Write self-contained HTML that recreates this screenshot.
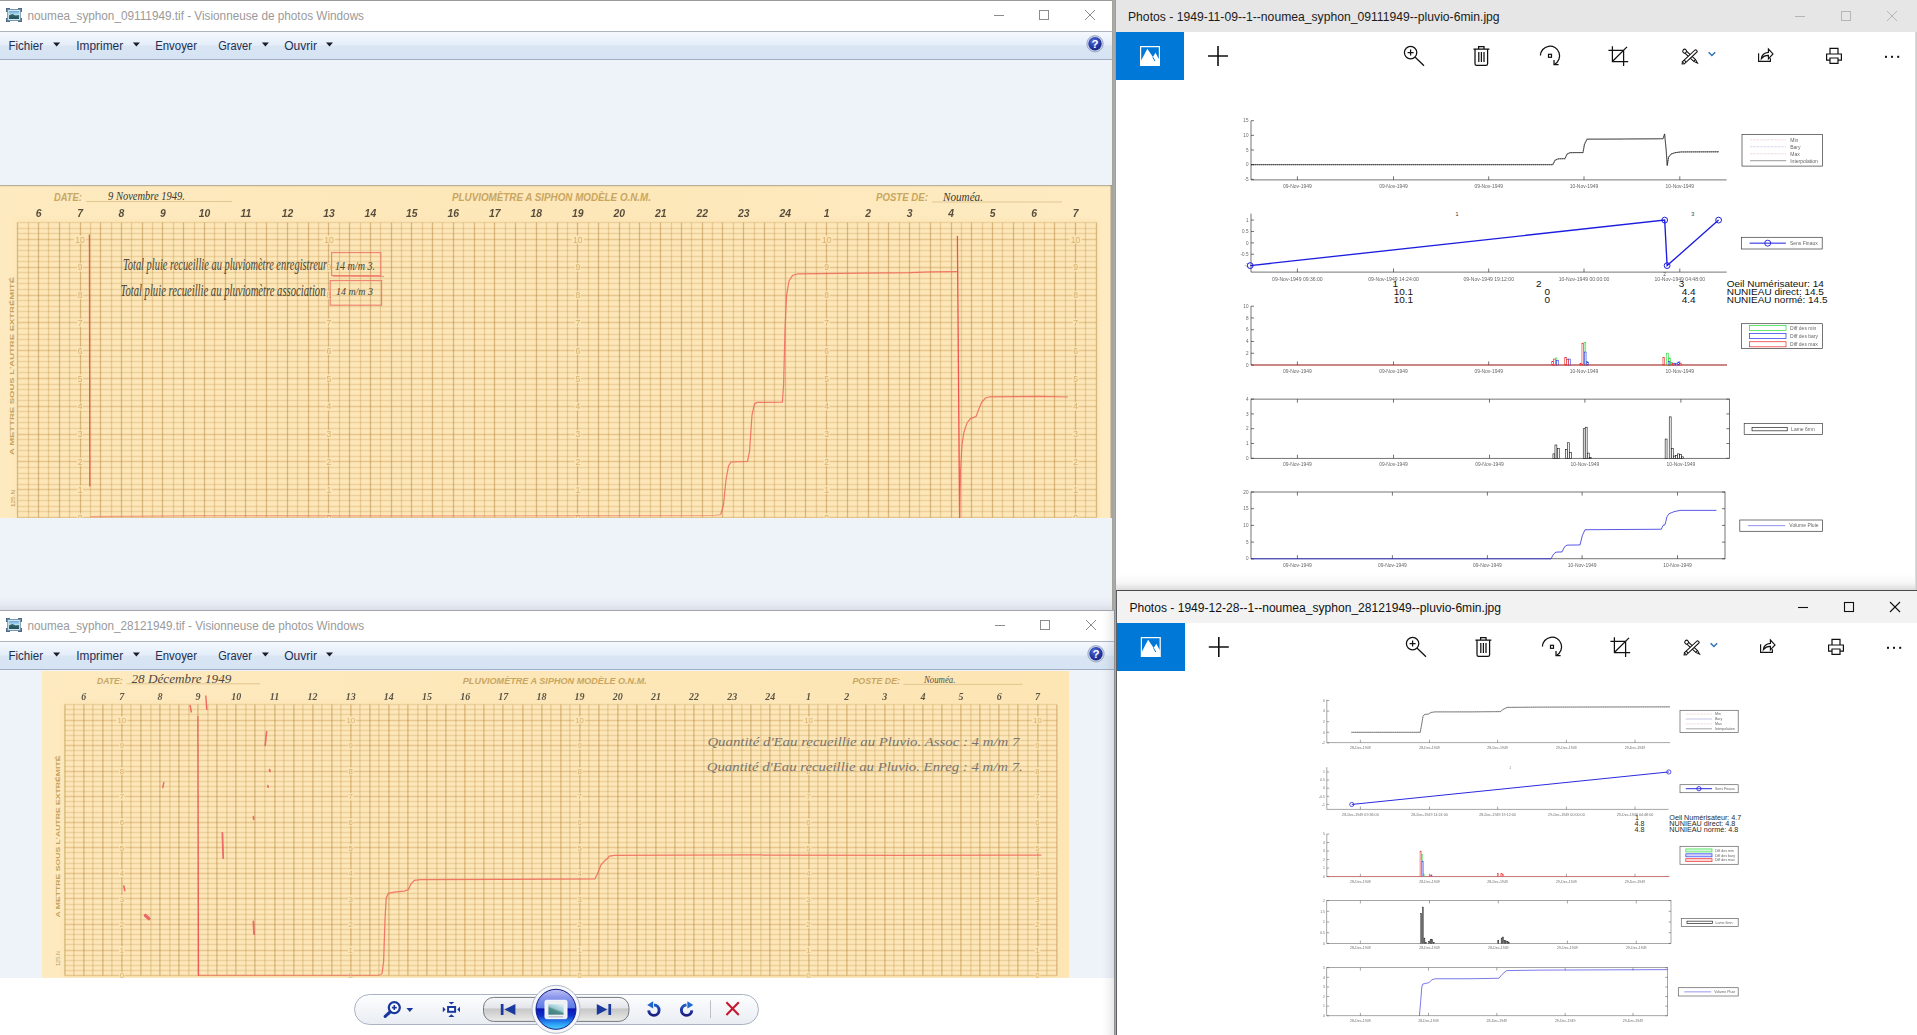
<!DOCTYPE html>
<html lang="fr"><head><meta charset="utf-8"><title>Visionneuse de photos Windows / Photos</title>
<style>
html,body{margin:0;padding:0;}
body{width:1917px;height:1035px;overflow:hidden;position:relative;background:#fff;
 font-family:"Liberation Sans","DejaVu Sans",sans-serif;font-size:12px;}
.win{position:absolute;left:0;top:0;width:0;height:0;}
.win>div,.win>svg{position:absolute;}
svg{display:block;overflow:hidden;}
svg.ov{left:0;top:0;pointer-events:none;}
svg text{font-family:"Liberation Sans","DejaVu Sans",sans-serif;}
svg text.sf{font-family:"Liberation Serif","DejaVu Serif",serif;}
.titlebar{background:#fff;}
.menubar{background:linear-gradient(#f5f8fd 0%,#e4eefa 47%,#d9e5f2 53%,#d5e3f4 100%);
 border-top:1px solid #adb5c1;border-bottom:1px solid #a2aec1;box-sizing:border-box;}
.viewbg{background:#eef3fa;}
.ptitle{background:#e6e6e6;}
.ptitle.act{background:#f2f2f2;}
.pbody{background:#fff;}
.bluebox{background:#0078d7;}
</style></head><body>
<div class="win" id="seam">
<div class="seam" style="left:1112px;top:0px;width:4.2px;height:1035px;background:linear-gradient(90deg,#a3a096 0,#a9a9a4 40%,#a9adb0 72%,#8e9498 100%);"></div>
</div>
<div class="win" id="winA">
<div class="titlebar" style="left:0px;top:0px;width:1112px;height:31px;border-top:1px solid #9b9b9b;box-sizing:border-box;"></div>
<div class="menubar" style="left:0px;top:31px;width:1112px;height:29px;"></div>
<div class="viewbg" style="left:0px;top:60px;width:1112px;height:550px;"></div>
<div class="shadow" style="left:0px;top:597px;width:1112px;height:13px;background:linear-gradient(rgba(100,100,112,0) 0,rgba(100,100,112,.05) 50%,rgba(100,100,112,.14) 100%);"></div>
<svg class="photo" style="left:0px;top:185px" width="1112" height="333.4" viewBox="0 185 1112 333.4">
<defs><filter id="soft" x="-2%" y="-5%" width="104%" height="110%"><feGaussianBlur stdDeviation="2.5"/></filter><linearGradient id="p1g" x1="0" y1="0" x2="1" y2="0"><stop offset="0" stop-color="#feeac0"/><stop offset=".5" stop-color="#fde7b8"/><stop offset="1" stop-color="#feebc2"/></linearGradient></defs>
<rect x="0" y="185" width="1112" height="333.4" fill="url(#p1g)" />
<rect x="0" y="185" width="1112" height="1.2" fill="#9c9684" opacity="0.7" />
<rect x="1110.5" y="185" width="1.5" height="333.4" fill="#8c8878" opacity="0.7" />
<rect x="14.5" y="219.5" width="1085" height="301" fill="#fde6b8" filter="url(#soft)"/>
<path d="M17.5 222.5H1096.5M17.5 228.5H1096.5M17.5 233.5H1096.5M17.5 245.5H1096.5M17.5 250.5H1096.5M17.5 256.5H1096.5M17.5 261.5H1096.5M17.5 272.5H1096.5M17.5 278.5H1096.5M17.5 283.5H1096.5M17.5 289.5H1096.5M17.5 300.5H1096.5M17.5 306.5H1096.5M17.5 311.5H1096.5M17.5 317.5H1096.5M17.5 328.5H1096.5M17.5 334.5H1096.5M17.5 339.5H1096.5M17.5 345.5H1096.5M17.5 356.5H1096.5M17.5 361.5H1096.5M17.5 367.5H1096.5M17.5 372.5H1096.5M17.5 384.5H1096.5M17.5 389.5H1096.5M17.5 395.5H1096.5M17.5 400.5H1096.5M17.5 411.5H1096.5M17.5 417.5H1096.5M17.5 422.5H1096.5M17.5 428.5H1096.5M17.5 439.5H1096.5M17.5 445.5H1096.5M17.5 450.5H1096.5M17.5 456.5H1096.5M17.5 467.5H1096.5M17.5 473.5H1096.5M17.5 478.5H1096.5M17.5 484.5H1096.5M17.5 495.5H1096.5M17.5 500.5H1096.5M17.5 506.5H1096.5M17.5 511.5H1096.5" stroke="#b07e2c" stroke-width="1.3" opacity=".20" fill="none"/>
<path d="M17.5 239.5H1096.5M17.5 267.5H1096.5M17.5 295.5H1096.5M17.5 322.5H1096.5M17.5 350.5H1096.5M17.5 378.5H1096.5M17.5 406.5H1096.5M17.5 434.5H1096.5M17.5 461.5H1096.5M17.5 489.5H1096.5M17.5 517.5H1096.5" stroke="#b07e2c" stroke-width="1.3" opacity=".30" fill="none"/>
<path d="M28.5 222.5V517.5M48.5 222.5V517.5M69.5 222.5V517.5M90.5 222.5V517.5M111.5 222.5V517.5M131.5 222.5V517.5M152.5 222.5V517.5M173.5 222.5V517.5M194.5 222.5V517.5M214.5 222.5V517.5M235.5 222.5V517.5M256.5 222.5V517.5M277.5 222.5V517.5M297.5 222.5V517.5M318.5 222.5V517.5M339.5 222.5V517.5M360.5 222.5V517.5M380.5 222.5V517.5M401.5 222.5V517.5M422.5 222.5V517.5M442.5 222.5V517.5M463.5 222.5V517.5M484.5 222.5V517.5M505.5 222.5V517.5M525.5 222.5V517.5M546.5 222.5V517.5M567.5 222.5V517.5M588.5 222.5V517.5M608.5 222.5V517.5M629.5 222.5V517.5M650.5 222.5V517.5M671.5 222.5V517.5M691.5 222.5V517.5M712.5 222.5V517.5M733.5 222.5V517.5M754.5 222.5V517.5M774.5 222.5V517.5M795.5 222.5V517.5M816.5 222.5V517.5M837.5 222.5V517.5M857.5 222.5V517.5M878.5 222.5V517.5M899.5 222.5V517.5M919.5 222.5V517.5M940.5 222.5V517.5M961.5 222.5V517.5M982.5 222.5V517.5M1002.5 222.5V517.5M1023.5 222.5V517.5M1044.5 222.5V517.5M1065.5 222.5V517.5M1085.5 222.5V517.5" stroke="#b08030" stroke-width="1.3" opacity=".27" fill="none"/>
<path d="M17.5 222.5V517.5M38.5 222.5V517.5M59.5 222.5V517.5M80.5 222.5V517.5M100.5 222.5V517.5M121.5 222.5V517.5M142.5 222.5V517.5M162.5 222.5V517.5M183.5 222.5V517.5M204.5 222.5V517.5M225.5 222.5V517.5M245.5 222.5V517.5M266.5 222.5V517.5M287.5 222.5V517.5M308.5 222.5V517.5M328.5 222.5V517.5M349.5 222.5V517.5M370.5 222.5V517.5M391.5 222.5V517.5M411.5 222.5V517.5M432.5 222.5V517.5M453.5 222.5V517.5M474.5 222.5V517.5M494.5 222.5V517.5M515.5 222.5V517.5M536.5 222.5V517.5M557.5 222.5V517.5M577.5 222.5V517.5M598.5 222.5V517.5M619.5 222.5V517.5M639.5 222.5V517.5M660.5 222.5V517.5M681.5 222.5V517.5M702.5 222.5V517.5M722.5 222.5V517.5M743.5 222.5V517.5M764.5 222.5V517.5M785.5 222.5V517.5M805.5 222.5V517.5M826.5 222.5V517.5M847.5 222.5V517.5M868.5 222.5V517.5M888.5 222.5V517.5M909.5 222.5V517.5M930.5 222.5V517.5M951.5 222.5V517.5M971.5 222.5V517.5M992.5 222.5V517.5M1013.5 222.5V517.5M1034.5 222.5V517.5M1054.5 222.5V517.5M1075.5 222.5V517.5M1096.5 222.5V517.5" stroke="#a8782a" stroke-width="1.3" opacity=".42" fill="none"/>
<text x="54" y="200.8" font-size="10.2" fill="#c9a660" textLength="28" lengthAdjust="spacingAndGlyphs" font-weight="bold" font-style="italic">DATE:</text>
<line x1="86" y1="201.5" x2="232" y2="201.5" stroke="#d9bf86" stroke-width="0.8" />
<text x="452" y="200.9" font-size="10.2" fill="#c9a660" textLength="199" lengthAdjust="spacingAndGlyphs" font-weight="bold" font-style="italic">PLUVIOMÈTRE A SIPHON MODÈLE O.N.M.</text>
<text x="876" y="200.9" font-size="10.2" fill="#c9a660" textLength="52" lengthAdjust="spacingAndGlyphs" font-weight="bold" font-style="italic">POSTE DE:</text>
<line x1="932" y1="202" x2="1062" y2="202" stroke="#d9bf86" stroke-width="0.8" />
<text x="108" y="200.5" font-size="11.5" fill="#3c3a30" textLength="77" lengthAdjust="spacingAndGlyphs" font-style="italic" class="sf">9 Novembre 1949.</text>
<text x="943" y="201" font-size="11.5" fill="#3c3a30" textLength="40" lengthAdjust="spacingAndGlyphs" font-style="italic" class="sf">Nouméa.</text>
<text x="38.54" y="216.8" font-size="10.4" fill="#453d2e" text-anchor="middle" font-weight="bold" font-style="italic" opacity="0.9">6</text>
<text x="80.02" y="216.8" font-size="10.4" fill="#453d2e" text-anchor="middle" font-weight="bold" font-style="italic" opacity="0.9">7</text>
<text x="121.5" y="216.8" font-size="10.4" fill="#453d2e" text-anchor="middle" font-weight="bold" font-style="italic" opacity="0.9">8</text>
<text x="162.98" y="216.8" font-size="10.4" fill="#453d2e" text-anchor="middle" font-weight="bold" font-style="italic" opacity="0.9">9</text>
<text x="204.46" y="216.8" font-size="10.4" fill="#453d2e" text-anchor="middle" font-weight="bold" font-style="italic" opacity="0.9">10</text>
<text x="245.94" y="216.8" font-size="10.4" fill="#453d2e" text-anchor="middle" font-weight="bold" font-style="italic" opacity="0.9">11</text>
<text x="287.42" y="216.8" font-size="10.4" fill="#453d2e" text-anchor="middle" font-weight="bold" font-style="italic" opacity="0.9">12</text>
<text x="328.9" y="216.8" font-size="10.4" fill="#453d2e" text-anchor="middle" font-weight="bold" font-style="italic" opacity="0.9">13</text>
<text x="370.38" y="216.8" font-size="10.4" fill="#453d2e" text-anchor="middle" font-weight="bold" font-style="italic" opacity="0.9">14</text>
<text x="411.86" y="216.8" font-size="10.4" fill="#453d2e" text-anchor="middle" font-weight="bold" font-style="italic" opacity="0.9">15</text>
<text x="453.34" y="216.8" font-size="10.4" fill="#453d2e" text-anchor="middle" font-weight="bold" font-style="italic" opacity="0.9">16</text>
<text x="494.82" y="216.8" font-size="10.4" fill="#453d2e" text-anchor="middle" font-weight="bold" font-style="italic" opacity="0.9">17</text>
<text x="536.3" y="216.8" font-size="10.4" fill="#453d2e" text-anchor="middle" font-weight="bold" font-style="italic" opacity="0.9">18</text>
<text x="577.78" y="216.8" font-size="10.4" fill="#453d2e" text-anchor="middle" font-weight="bold" font-style="italic" opacity="0.9">19</text>
<text x="619.26" y="216.8" font-size="10.4" fill="#453d2e" text-anchor="middle" font-weight="bold" font-style="italic" opacity="0.9">20</text>
<text x="660.74" y="216.8" font-size="10.4" fill="#453d2e" text-anchor="middle" font-weight="bold" font-style="italic" opacity="0.9">21</text>
<text x="702.22" y="216.8" font-size="10.4" fill="#453d2e" text-anchor="middle" font-weight="bold" font-style="italic" opacity="0.9">22</text>
<text x="743.7" y="216.8" font-size="10.4" fill="#453d2e" text-anchor="middle" font-weight="bold" font-style="italic" opacity="0.9">23</text>
<text x="785.18" y="216.8" font-size="10.4" fill="#453d2e" text-anchor="middle" font-weight="bold" font-style="italic" opacity="0.9">24</text>
<text x="826.66" y="216.8" font-size="10.4" fill="#453d2e" text-anchor="middle" font-weight="bold" font-style="italic" opacity="0.9">1</text>
<text x="868.14" y="216.8" font-size="10.4" fill="#453d2e" text-anchor="middle" font-weight="bold" font-style="italic" opacity="0.9">2</text>
<text x="909.62" y="216.8" font-size="10.4" fill="#453d2e" text-anchor="middle" font-weight="bold" font-style="italic" opacity="0.9">3</text>
<text x="951.1" y="216.8" font-size="10.4" fill="#453d2e" text-anchor="middle" font-weight="bold" font-style="italic" opacity="0.9">4</text>
<text x="992.58" y="216.8" font-size="10.4" fill="#453d2e" text-anchor="middle" font-weight="bold" font-style="italic" opacity="0.9">5</text>
<text x="1034.06" y="216.8" font-size="10.4" fill="#453d2e" text-anchor="middle" font-weight="bold" font-style="italic" opacity="0.9">6</text>
<text x="1075.54" y="216.8" font-size="10.4" fill="#453d2e" text-anchor="middle" font-weight="bold" font-style="italic" opacity="0.9">7</text>
<rect x="76.92" y="513.2" width="6.19" height="8.6" fill="#fde6b8" opacity="0.8" />
<text x="80.02" y="520.6" font-size="8.6" fill="#cfa55a" text-anchor="middle" opacity="0.8">0</text>
<rect x="76.92" y="485.4" width="6.19" height="8.6" fill="#fde6b8" opacity="0.8" />
<text x="80.02" y="492.8" font-size="8.6" fill="#cfa55a" text-anchor="middle" opacity="0.8">1</text>
<rect x="76.92" y="457.6" width="6.19" height="8.6" fill="#fde6b8" opacity="0.8" />
<text x="80.02" y="465" font-size="8.6" fill="#cfa55a" text-anchor="middle" opacity="0.8">2</text>
<rect x="76.92" y="429.8" width="6.19" height="8.6" fill="#fde6b8" opacity="0.8" />
<text x="80.02" y="437.2" font-size="8.6" fill="#cfa55a" text-anchor="middle" opacity="0.8">3</text>
<rect x="76.92" y="402" width="6.19" height="8.6" fill="#fde6b8" opacity="0.8" />
<text x="80.02" y="409.4" font-size="8.6" fill="#cfa55a" text-anchor="middle" opacity="0.8">4</text>
<rect x="76.92" y="374.2" width="6.19" height="8.6" fill="#fde6b8" opacity="0.8" />
<text x="80.02" y="381.6" font-size="8.6" fill="#cfa55a" text-anchor="middle" opacity="0.8">5</text>
<rect x="76.92" y="346.4" width="6.19" height="8.6" fill="#fde6b8" opacity="0.8" />
<text x="80.02" y="353.8" font-size="8.6" fill="#cfa55a" text-anchor="middle" opacity="0.8">6</text>
<rect x="76.92" y="318.6" width="6.19" height="8.6" fill="#fde6b8" opacity="0.8" />
<text x="80.02" y="326" font-size="8.6" fill="#cfa55a" text-anchor="middle" opacity="0.8">7</text>
<rect x="76.92" y="290.8" width="6.19" height="8.6" fill="#fde6b8" opacity="0.8" />
<text x="80.02" y="298.2" font-size="8.6" fill="#cfa55a" text-anchor="middle" opacity="0.8">8</text>
<rect x="76.92" y="263" width="6.19" height="8.6" fill="#fde6b8" opacity="0.8" />
<text x="80.02" y="270.4" font-size="8.6" fill="#cfa55a" text-anchor="middle" opacity="0.8">9</text>
<rect x="73.83" y="235.2" width="12.38" height="8.6" fill="#fde6b8" opacity="0.8" />
<text x="80.02" y="242.6" font-size="8.6" fill="#cfa55a" text-anchor="middle" opacity="0.8">10</text>
<rect x="325.8" y="513.2" width="6.19" height="8.6" fill="#fde6b8" opacity="0.8" />
<text x="328.9" y="520.6" font-size="8.6" fill="#cfa55a" text-anchor="middle" opacity="0.8">0</text>
<rect x="325.8" y="485.4" width="6.19" height="8.6" fill="#fde6b8" opacity="0.8" />
<text x="328.9" y="492.8" font-size="8.6" fill="#cfa55a" text-anchor="middle" opacity="0.8">1</text>
<rect x="325.8" y="457.6" width="6.19" height="8.6" fill="#fde6b8" opacity="0.8" />
<text x="328.9" y="465" font-size="8.6" fill="#cfa55a" text-anchor="middle" opacity="0.8">2</text>
<rect x="325.8" y="429.8" width="6.19" height="8.6" fill="#fde6b8" opacity="0.8" />
<text x="328.9" y="437.2" font-size="8.6" fill="#cfa55a" text-anchor="middle" opacity="0.8">3</text>
<rect x="325.8" y="402" width="6.19" height="8.6" fill="#fde6b8" opacity="0.8" />
<text x="328.9" y="409.4" font-size="8.6" fill="#cfa55a" text-anchor="middle" opacity="0.8">4</text>
<rect x="325.8" y="374.2" width="6.19" height="8.6" fill="#fde6b8" opacity="0.8" />
<text x="328.9" y="381.6" font-size="8.6" fill="#cfa55a" text-anchor="middle" opacity="0.8">5</text>
<rect x="325.8" y="346.4" width="6.19" height="8.6" fill="#fde6b8" opacity="0.8" />
<text x="328.9" y="353.8" font-size="8.6" fill="#cfa55a" text-anchor="middle" opacity="0.8">6</text>
<rect x="325.8" y="318.6" width="6.19" height="8.6" fill="#fde6b8" opacity="0.8" />
<text x="328.9" y="326" font-size="8.6" fill="#cfa55a" text-anchor="middle" opacity="0.8">7</text>
<rect x="325.8" y="290.8" width="6.19" height="8.6" fill="#fde6b8" opacity="0.8" />
<text x="328.9" y="298.2" font-size="8.6" fill="#cfa55a" text-anchor="middle" opacity="0.8">8</text>
<rect x="325.8" y="263" width="6.19" height="8.6" fill="#fde6b8" opacity="0.8" />
<text x="328.9" y="270.4" font-size="8.6" fill="#cfa55a" text-anchor="middle" opacity="0.8">9</text>
<rect x="322.71" y="235.2" width="12.38" height="8.6" fill="#fde6b8" opacity="0.8" />
<text x="328.9" y="242.6" font-size="8.6" fill="#cfa55a" text-anchor="middle" opacity="0.8">10</text>
<rect x="574.68" y="513.2" width="6.19" height="8.6" fill="#fde6b8" opacity="0.8" />
<text x="577.78" y="520.6" font-size="8.6" fill="#cfa55a" text-anchor="middle" opacity="0.8">0</text>
<rect x="574.68" y="485.4" width="6.19" height="8.6" fill="#fde6b8" opacity="0.8" />
<text x="577.78" y="492.8" font-size="8.6" fill="#cfa55a" text-anchor="middle" opacity="0.8">1</text>
<rect x="574.68" y="457.6" width="6.19" height="8.6" fill="#fde6b8" opacity="0.8" />
<text x="577.78" y="465" font-size="8.6" fill="#cfa55a" text-anchor="middle" opacity="0.8">2</text>
<rect x="574.68" y="429.8" width="6.19" height="8.6" fill="#fde6b8" opacity="0.8" />
<text x="577.78" y="437.2" font-size="8.6" fill="#cfa55a" text-anchor="middle" opacity="0.8">3</text>
<rect x="574.68" y="402" width="6.19" height="8.6" fill="#fde6b8" opacity="0.8" />
<text x="577.78" y="409.4" font-size="8.6" fill="#cfa55a" text-anchor="middle" opacity="0.8">4</text>
<rect x="574.68" y="374.2" width="6.19" height="8.6" fill="#fde6b8" opacity="0.8" />
<text x="577.78" y="381.6" font-size="8.6" fill="#cfa55a" text-anchor="middle" opacity="0.8">5</text>
<rect x="574.68" y="346.4" width="6.19" height="8.6" fill="#fde6b8" opacity="0.8" />
<text x="577.78" y="353.8" font-size="8.6" fill="#cfa55a" text-anchor="middle" opacity="0.8">6</text>
<rect x="574.68" y="318.6" width="6.19" height="8.6" fill="#fde6b8" opacity="0.8" />
<text x="577.78" y="326" font-size="8.6" fill="#cfa55a" text-anchor="middle" opacity="0.8">7</text>
<rect x="574.68" y="290.8" width="6.19" height="8.6" fill="#fde6b8" opacity="0.8" />
<text x="577.78" y="298.2" font-size="8.6" fill="#cfa55a" text-anchor="middle" opacity="0.8">8</text>
<rect x="574.68" y="263" width="6.19" height="8.6" fill="#fde6b8" opacity="0.8" />
<text x="577.78" y="270.4" font-size="8.6" fill="#cfa55a" text-anchor="middle" opacity="0.8">9</text>
<rect x="571.59" y="235.2" width="12.38" height="8.6" fill="#fde6b8" opacity="0.8" />
<text x="577.78" y="242.6" font-size="8.6" fill="#cfa55a" text-anchor="middle" opacity="0.8">10</text>
<rect x="823.56" y="513.2" width="6.19" height="8.6" fill="#fde6b8" opacity="0.8" />
<text x="826.66" y="520.6" font-size="8.6" fill="#cfa55a" text-anchor="middle" opacity="0.8">0</text>
<rect x="823.56" y="485.4" width="6.19" height="8.6" fill="#fde6b8" opacity="0.8" />
<text x="826.66" y="492.8" font-size="8.6" fill="#cfa55a" text-anchor="middle" opacity="0.8">1</text>
<rect x="823.56" y="457.6" width="6.19" height="8.6" fill="#fde6b8" opacity="0.8" />
<text x="826.66" y="465" font-size="8.6" fill="#cfa55a" text-anchor="middle" opacity="0.8">2</text>
<rect x="823.56" y="429.8" width="6.19" height="8.6" fill="#fde6b8" opacity="0.8" />
<text x="826.66" y="437.2" font-size="8.6" fill="#cfa55a" text-anchor="middle" opacity="0.8">3</text>
<rect x="823.56" y="402" width="6.19" height="8.6" fill="#fde6b8" opacity="0.8" />
<text x="826.66" y="409.4" font-size="8.6" fill="#cfa55a" text-anchor="middle" opacity="0.8">4</text>
<rect x="823.56" y="374.2" width="6.19" height="8.6" fill="#fde6b8" opacity="0.8" />
<text x="826.66" y="381.6" font-size="8.6" fill="#cfa55a" text-anchor="middle" opacity="0.8">5</text>
<rect x="823.56" y="346.4" width="6.19" height="8.6" fill="#fde6b8" opacity="0.8" />
<text x="826.66" y="353.8" font-size="8.6" fill="#cfa55a" text-anchor="middle" opacity="0.8">6</text>
<rect x="823.56" y="318.6" width="6.19" height="8.6" fill="#fde6b8" opacity="0.8" />
<text x="826.66" y="326" font-size="8.6" fill="#cfa55a" text-anchor="middle" opacity="0.8">7</text>
<rect x="823.56" y="290.8" width="6.19" height="8.6" fill="#fde6b8" opacity="0.8" />
<text x="826.66" y="298.2" font-size="8.6" fill="#cfa55a" text-anchor="middle" opacity="0.8">8</text>
<rect x="823.56" y="263" width="6.19" height="8.6" fill="#fde6b8" opacity="0.8" />
<text x="826.66" y="270.4" font-size="8.6" fill="#cfa55a" text-anchor="middle" opacity="0.8">9</text>
<rect x="820.47" y="235.2" width="12.38" height="8.6" fill="#fde6b8" opacity="0.8" />
<text x="826.66" y="242.6" font-size="8.6" fill="#cfa55a" text-anchor="middle" opacity="0.8">10</text>
<rect x="1072.44" y="513.2" width="6.19" height="8.6" fill="#fde6b8" opacity="0.8" />
<text x="1075.54" y="520.6" font-size="8.6" fill="#cfa55a" text-anchor="middle" opacity="0.8">0</text>
<rect x="1072.44" y="485.4" width="6.19" height="8.6" fill="#fde6b8" opacity="0.8" />
<text x="1075.54" y="492.8" font-size="8.6" fill="#cfa55a" text-anchor="middle" opacity="0.8">1</text>
<rect x="1072.44" y="457.6" width="6.19" height="8.6" fill="#fde6b8" opacity="0.8" />
<text x="1075.54" y="465" font-size="8.6" fill="#cfa55a" text-anchor="middle" opacity="0.8">2</text>
<rect x="1072.44" y="429.8" width="6.19" height="8.6" fill="#fde6b8" opacity="0.8" />
<text x="1075.54" y="437.2" font-size="8.6" fill="#cfa55a" text-anchor="middle" opacity="0.8">3</text>
<rect x="1072.44" y="402" width="6.19" height="8.6" fill="#fde6b8" opacity="0.8" />
<text x="1075.54" y="409.4" font-size="8.6" fill="#cfa55a" text-anchor="middle" opacity="0.8">4</text>
<rect x="1072.44" y="374.2" width="6.19" height="8.6" fill="#fde6b8" opacity="0.8" />
<text x="1075.54" y="381.6" font-size="8.6" fill="#cfa55a" text-anchor="middle" opacity="0.8">5</text>
<rect x="1072.44" y="346.4" width="6.19" height="8.6" fill="#fde6b8" opacity="0.8" />
<text x="1075.54" y="353.8" font-size="8.6" fill="#cfa55a" text-anchor="middle" opacity="0.8">6</text>
<rect x="1072.44" y="318.6" width="6.19" height="8.6" fill="#fde6b8" opacity="0.8" />
<text x="1075.54" y="326" font-size="8.6" fill="#cfa55a" text-anchor="middle" opacity="0.8">7</text>
<rect x="1072.44" y="290.8" width="6.19" height="8.6" fill="#fde6b8" opacity="0.8" />
<text x="1075.54" y="298.2" font-size="8.6" fill="#cfa55a" text-anchor="middle" opacity="0.8">8</text>
<rect x="1072.44" y="263" width="6.19" height="8.6" fill="#fde6b8" opacity="0.8" />
<text x="1075.54" y="270.4" font-size="8.6" fill="#cfa55a" text-anchor="middle" opacity="0.8">9</text>
<rect x="1069.35" y="235.2" width="12.38" height="8.6" fill="#fde6b8" opacity="0.8" />
<text x="1075.54" y="242.6" font-size="8.6" fill="#cfa55a" text-anchor="middle" opacity="0.8">10</text>
<text x="14.4" y="455" font-size="5.6" fill="#c4a058" textLength="178" lengthAdjust="spacingAndGlyphs" font-weight="bold" transform="rotate(-90 14.4 455)">A METTRE SOUS L'AUTRE EXTRÉMITÉ</text>
<text x="14.6" y="507" font-size="5" fill="#b8985a" textLength="17" lengthAdjust="spacingAndGlyphs" transform="rotate(-90 14.6 507)">125.N</text>
<text x="123" y="270" font-size="17.5" fill="#4b4636" textLength="204" lengthAdjust="spacingAndGlyphs" font-style="italic" class="sf">Total pluie recueillie au pluviomètre enregistreur</text>
<text x="120.5" y="296" font-size="17.5" fill="#4b4636" textLength="205" lengthAdjust="spacingAndGlyphs" font-style="italic" class="sf">Total pluie recueillie au pluviomètre association</text>
<text x="335" y="270" font-size="11.5" fill="#4b4636" textLength="40" lengthAdjust="spacingAndGlyphs" font-style="italic" class="sf">14 m/m 3.</text>
<text x="336" y="295" font-size="10" fill="#4b4636" textLength="37" lengthAdjust="spacingAndGlyphs" font-style="italic" class="sf">14 m/m 3</text>
<rect x="331.6" y="252.6" width="49.2" height="23" fill="none" stroke="#ec6f62" stroke-width="1.1" opacity="0.85" />
<line x1="333" y1="276.2" x2="384" y2="276.6" stroke="#ec6f62" stroke-width="1" opacity="0.7" />
<rect x="330.2" y="280.6" width="51.4" height="24.6" fill="none" stroke="#ec6f62" stroke-width="1.1" opacity="0.85" />
<line x1="89.4" y1="234.5" x2="89.8" y2="486.5" stroke="#ee4a4a" stroke-width="1.3" opacity="0.9" />
<polyline points="90.5,516.6 200,515.6 400,515.9 600,515.6 715,515.4 720.7,514.5" fill="none" stroke="#ef6558" stroke-width="1.2" opacity="0.5" />
<polyline points="720.7,514.5 723.5,505 726,480 728.5,466 731,462 747.5,461.5 749.5,452 752,415 754.5,404 757,402.4 782.4,402.2 783.6,385 785,330 786.6,295 789,281 792.5,275.4 798,273.8 860,273.2 910,272.6 930,271.8 957,271.6" fill="none" stroke="#ef6558" stroke-width="1.2" opacity="0.85" />
<line x1="957.4" y1="236" x2="959.6" y2="518" stroke="#ee4444" stroke-width="1.3" opacity="0.9" />
<polyline points="959.6,517 960.6,470 962,445 964,432 967,423 970.5,418.6 976,416.6 978.5,410 981.5,402.5 985.5,398 990,396.8 1040,396.4 1068,397" fill="none" stroke="#ef6558" stroke-width="1.2" opacity="0.85" />
</svg>
<svg class="ov" width="1917" height="1035" viewBox="0 0 1917 1035" ><defs>
<linearGradient id="icoPic" x1="0" y1="0" x2="0" y2="1"><stop offset="0" stop-color="#6aa6d8"/><stop offset=".5" stop-color="#bfe6f2"/><stop offset="1" stop-color="#2c5f66"/></linearGradient>
<radialGradient id="helpG" cx=".4" cy=".3" r=".8"><stop offset="0" stop-color="#5470d8"/><stop offset=".6" stop-color="#2337a6"/><stop offset="1" stop-color="#15216e"/></radialGradient>
<linearGradient id="pillG" x1="0" y1="0" x2="0" y2="1"><stop offset="0" stop-color="#fdfeff"/><stop offset=".5" stop-color="#f3f5f9"/><stop offset="1" stop-color="#e9edf3"/></linearGradient>
<linearGradient id="navG" x1="0" y1="0" x2="0" y2="1"><stop offset="0" stop-color="#f7f8fa"/><stop offset=".44" stop-color="#e3e5ea"/><stop offset=".48" stop-color="#c6c7c6"/><stop offset="1" stop-color="#ececea"/></linearGradient>
<linearGradient id="ballG" x1="0" y1="0" x2="0" y2="1"><stop offset="0" stop-color="#c2c4f4"/><stop offset=".18" stop-color="#8f9aec"/><stop offset=".46" stop-color="#5c7ce6"/><stop offset=".49" stop-color="#0a15b2"/><stop offset=".66" stop-color="#102fca"/><stop offset=".86" stop-color="#2a9cf5"/><stop offset="1" stop-color="#52d4ff"/></linearGradient>
<linearGradient id="picG" x1=".8" y1="0" x2=".2" y2="1"><stop offset="0" stop-color="#d4ecf4"/><stop offset=".45" stop-color="#9cc9d2"/><stop offset=".6" stop-color="#4f8f8a"/><stop offset="1" stop-color="#3f7f86"/></linearGradient>
<linearGradient id="rotG" gradientUnits="userSpaceOnUse" x1="0" y1="1003" x2="0" y2="1016"><stop offset="0" stop-color="#1f6ad2"/><stop offset=".5" stop-color="#1a3aa8"/><stop offset="1" stop-color="#1b1d7e"/></linearGradient>
</defs>
<g transform="translate(6 8)">
<path d="M0 0h4v1.6h-2.4v2.4h-1.6zM16 0h-4v1.6h2.4v2.4h1.6zM0 14h4v-1.6h-2.4v-2.4h-1.6zM16 14h-4v-1.6h2.4v-2.4h1.6z" fill="#4d6b86"/>
<rect x="1.7" y="1.4" width="12.6" height="11" fill="#cdeaf6" stroke="#5f7f9a" stroke-width="0.8" />
<rect x="3.1" y="3" width="9.8" height="7.9" fill="url(#icoPic)" />
<path d="M3.1 7.2 L6.5 6 L9.5 7.4 L12.9 7 V10.9 H3.1z" fill="#1f4d55" opacity=".85"/>
</g>
<text x="27.5" y="20" font-size="12" fill="#9a9a9a" textLength="336.5" lengthAdjust="spacingAndGlyphs">noumea_syphon_09111949.tif - Visionneuse de photos Windows</text>
<line x1="994" y1="15.5" x2="1004" y2="15.5" stroke="#8c8c8c" stroke-width="1" />
<rect x="1039.5" y="10.5" width="9" height="9" fill="none" stroke="#8c8c8c" stroke-width="1" />
<line x1="1085" y1="10" x2="1095" y2="20" stroke="#8c8c8c" stroke-width="1" />
<line x1="1095" y1="10" x2="1085" y2="20" stroke="#8c8c8c" stroke-width="1" />
<text x="8.4" y="49.5" font-size="12" fill="#1e2f52" textLength="34.6" lengthAdjust="spacingAndGlyphs">Fichier</text>
<path d="M53.1 42.5 h7 l-3.5 4z" fill="#1b1b2b"/>
<text x="76.3" y="49.5" font-size="12" fill="#1e2f52" textLength="46.8" lengthAdjust="spacingAndGlyphs">Imprimer</text>
<path d="M132.9 42.5 h7 l-3.5 4z" fill="#1b1b2b"/>
<text x="155.2" y="49.5" font-size="12" fill="#1e2f52" textLength="41.8" lengthAdjust="spacingAndGlyphs">Envoyer</text>
<text x="218.2" y="49.5" font-size="12" fill="#1e2f52" textLength="33.7" lengthAdjust="spacingAndGlyphs">Graver</text>
<path d="M261.9 42.5 h7 l-3.5 4z" fill="#1b1b2b"/>
<text x="284.2" y="49.5" font-size="12" fill="#1e2f52" textLength="32.8" lengthAdjust="spacingAndGlyphs">Ouvrir</text>
<path d="M326 42.5 h7 l-3.5 4z" fill="#1b1b2b"/>
<circle cx="1095" cy="43.8" r="8.2" fill="#c9d3e6" stroke="#8f9dbd" stroke-width=".8"/>
<circle cx="1095" cy="43.8" r="6.7" fill="url(#helpG)"/>
<text x="1095" y="48" font-size="11.5" fill="#fff" text-anchor="middle" font-weight="bold">?</text>
</svg>
</div>
<div class="win" id="winB">
<div class="titlebar" style="left:0px;top:610px;width:1114px;height:31px;border-top:1px solid #a4a4ac;box-sizing:border-box;"></div>
<div class="menubar" style="left:0px;top:641px;width:1114px;height:29px;"></div>
<div class="viewbg" style="left:0px;top:670px;width:1114px;height:308px;"></div>
<div class="bottombar" style="left:0px;top:977.8px;width:1114px;height:57.2px;background:#fff;"></div>
<div class="shadow" style="left:1102px;top:611px;width:11.8px;height:424px;background:linear-gradient(90deg,rgba(100,100,112,0) 0,rgba(100,100,112,.05) 50%,rgba(100,100,112,.15) 100%);"></div>
<div class="edge" style="left:1113.8px;top:610px;width:2.6px;height:425px;background:linear-gradient(90deg,#8f9094 0,#8f9094 38%,#a8a8ac 62%,#a8a8ac 100%);"></div>
<svg class="photo" style="left:41.6px;top:671px" width="1027.6" height="306.8" viewBox="41.6 671 1027.6 306.8">
<defs><linearGradient id="p2g" x1="0" y1="0" x2="1" y2="0"><stop offset="0" stop-color="#feeac0"/><stop offset=".5" stop-color="#fde7b8"/><stop offset="1" stop-color="#fde5b4"/></linearGradient></defs>
<rect x="41.6" y="671" width="1027.6" height="306.8" fill="url(#p2g)" />
<rect x="61.5" y="701.5" width="998" height="277" fill="#fde6b8" filter="url(#soft)"/>
<path d="M64.5 704.5H1056.5M64.5 709.5H1056.5M64.5 714.5H1056.5M64.5 725.5H1056.5M64.5 730.5H1056.5M64.5 735.5H1056.5M64.5 740.5H1056.5M64.5 750.5H1056.5M64.5 755.5H1056.5M64.5 760.5H1056.5M64.5 766.5H1056.5M64.5 776.5H1056.5M64.5 781.5H1056.5M64.5 786.5H1056.5M64.5 791.5H1056.5M64.5 801.5H1056.5M64.5 806.5H1056.5M64.5 812.5H1056.5M64.5 817.5H1056.5M64.5 827.5H1056.5M64.5 832.5H1056.5M64.5 837.5H1056.5M64.5 842.5H1056.5M64.5 852.5H1056.5M64.5 858.5H1056.5M64.5 863.5H1056.5M64.5 868.5H1056.5M64.5 878.5H1056.5M64.5 883.5H1056.5M64.5 888.5H1056.5M64.5 893.5H1056.5M64.5 904.5H1056.5M64.5 909.5H1056.5M64.5 914.5H1056.5M64.5 919.5H1056.5M64.5 929.5H1056.5M64.5 934.5H1056.5M64.5 939.5H1056.5M64.5 944.5H1056.5M64.5 955.5H1056.5M64.5 960.5H1056.5M64.5 965.5H1056.5M64.5 970.5H1056.5" stroke="#b07e2c" stroke-width="1.3" opacity=".20" fill="none"/>
<path d="M64.5 720.5H1056.5M64.5 745.5H1056.5M64.5 771.5H1056.5M64.5 796.5H1056.5M64.5 822.5H1056.5M64.5 847.5H1056.5M64.5 873.5H1056.5M64.5 898.5H1056.5M64.5 924.5H1056.5M64.5 950.5H1056.5M64.5 975.5H1056.5" stroke="#b07e2c" stroke-width="1.3" opacity=".30" fill="none"/>
<path d="M73.5 704.5V975.5M92.5 704.5V975.5M111.5 704.5V975.5M130.5 704.5V975.5M150.5 704.5V975.5M169.5 704.5V975.5M188.5 704.5V975.5M207.5 704.5V975.5M226.5 704.5V975.5M245.5 704.5V975.5M264.5 704.5V975.5M283.5 704.5V975.5M302.5 704.5V975.5M321.5 704.5V975.5M340.5 704.5V975.5M359.5 704.5V975.5M378.5 704.5V975.5M398.5 704.5V975.5M417.5 704.5V975.5M436.5 704.5V975.5M455.5 704.5V975.5M474.5 704.5V975.5M493.5 704.5V975.5M512.5 704.5V975.5M531.5 704.5V975.5M550.5 704.5V975.5M569.5 704.5V975.5M588.5 704.5V975.5M607.5 704.5V975.5M626.5 704.5V975.5M645.5 704.5V975.5M665.5 704.5V975.5M684.5 704.5V975.5M703.5 704.5V975.5M722.5 704.5V975.5M741.5 704.5V975.5M760.5 704.5V975.5M779.5 704.5V975.5M798.5 704.5V975.5M817.5 704.5V975.5M836.5 704.5V975.5M855.5 704.5V975.5M874.5 704.5V975.5M893.5 704.5V975.5M913.5 704.5V975.5M932.5 704.5V975.5M951.5 704.5V975.5M970.5 704.5V975.5M989.5 704.5V975.5M1008.5 704.5V975.5M1027.5 704.5V975.5M1046.5 704.5V975.5" stroke="#b08030" stroke-width="1.3" opacity=".27" fill="none"/>
<path d="M64.5 704.5V975.5M83.5 704.5V975.5M102.5 704.5V975.5M121.5 704.5V975.5M140.5 704.5V975.5M159.5 704.5V975.5M178.5 704.5V975.5M197.5 704.5V975.5M216.5 704.5V975.5M235.5 704.5V975.5M254.5 704.5V975.5M274.5 704.5V975.5M293.5 704.5V975.5M312.5 704.5V975.5M331.5 704.5V975.5M350.5 704.5V975.5M369.5 704.5V975.5M388.5 704.5V975.5M407.5 704.5V975.5M426.5 704.5V975.5M445.5 704.5V975.5M464.5 704.5V975.5M483.5 704.5V975.5M502.5 704.5V975.5M522.5 704.5V975.5M541.5 704.5V975.5M560.5 704.5V975.5M579.5 704.5V975.5M598.5 704.5V975.5M617.5 704.5V975.5M636.5 704.5V975.5M655.5 704.5V975.5M674.5 704.5V975.5M693.5 704.5V975.5M712.5 704.5V975.5M731.5 704.5V975.5M750.5 704.5V975.5M769.5 704.5V975.5M789.5 704.5V975.5M808.5 704.5V975.5M827.5 704.5V975.5M846.5 704.5V975.5M865.5 704.5V975.5M884.5 704.5V975.5M903.5 704.5V975.5M922.5 704.5V975.5M941.5 704.5V975.5M960.5 704.5V975.5M979.5 704.5V975.5M998.5 704.5V975.5M1017.5 704.5V975.5M1037.5 704.5V975.5M1056.5 704.5V975.5" stroke="#a8782a" stroke-width="1.3" opacity=".42" fill="none"/>
<text x="96.6" y="683.8" font-size="9.4" fill="#c9a660" textLength="25.6" lengthAdjust="spacingAndGlyphs" font-weight="bold" font-style="italic">DATE:</text>
<line x1="126" y1="683.8" x2="260" y2="683.8" stroke="#d9bf86" stroke-width="0.8" />
<text x="462.4" y="684" font-size="9.4" fill="#c9a660" textLength="184" lengthAdjust="spacingAndGlyphs" font-weight="bold" font-style="italic">PLUVIOMÈTRE A SIPHON MODÈLE O.N.M.</text>
<text x="852" y="684" font-size="9.4" fill="#c9a660" textLength="47.6" lengthAdjust="spacingAndGlyphs" font-weight="bold" font-style="italic">POSTE DE:</text>
<line x1="903" y1="684.4" x2="1022" y2="684.4" stroke="#d9bf86" stroke-width="0.8" />
<text x="131" y="683.4" font-size="12.5" fill="#4d4a42" textLength="100" lengthAdjust="spacingAndGlyphs" font-style="italic" class="sf">28 Décembre 1949</text>
<text x="923.6" y="683.4" font-size="9.5" fill="#55524a" textLength="31.4" lengthAdjust="spacingAndGlyphs" font-style="italic" class="sf">Nouméa.</text>
<text x="83.28" y="699.6" font-size="10" fill="#3e3b32" text-anchor="middle" font-weight="bold" font-style="italic" class="sf" opacity="0.85">6</text>
<text x="121.42" y="699.6" font-size="10" fill="#3e3b32" text-anchor="middle" font-weight="bold" font-style="italic" class="sf" opacity="0.85">7</text>
<text x="159.57" y="699.6" font-size="10" fill="#3e3b32" text-anchor="middle" font-weight="bold" font-style="italic" class="sf" opacity="0.85">8</text>
<text x="197.73" y="699.6" font-size="10" fill="#3e3b32" text-anchor="middle" font-weight="bold" font-style="italic" class="sf" opacity="0.85">9</text>
<text x="235.88" y="699.6" font-size="10" fill="#3e3b32" text-anchor="middle" font-weight="bold" font-style="italic" class="sf" opacity="0.85">10</text>
<text x="274.02" y="699.6" font-size="10" fill="#3e3b32" text-anchor="middle" font-weight="bold" font-style="italic" class="sf" opacity="0.85">11</text>
<text x="312.18" y="699.6" font-size="10" fill="#3e3b32" text-anchor="middle" font-weight="bold" font-style="italic" class="sf" opacity="0.85">12</text>
<text x="350.32" y="699.6" font-size="10" fill="#3e3b32" text-anchor="middle" font-weight="bold" font-style="italic" class="sf" opacity="0.85">13</text>
<text x="388.47" y="699.6" font-size="10" fill="#3e3b32" text-anchor="middle" font-weight="bold" font-style="italic" class="sf" opacity="0.85">14</text>
<text x="426.62" y="699.6" font-size="10" fill="#3e3b32" text-anchor="middle" font-weight="bold" font-style="italic" class="sf" opacity="0.85">15</text>
<text x="464.77" y="699.6" font-size="10" fill="#3e3b32" text-anchor="middle" font-weight="bold" font-style="italic" class="sf" opacity="0.85">16</text>
<text x="502.92" y="699.6" font-size="10" fill="#3e3b32" text-anchor="middle" font-weight="bold" font-style="italic" class="sf" opacity="0.85">17</text>
<text x="541.08" y="699.6" font-size="10" fill="#3e3b32" text-anchor="middle" font-weight="bold" font-style="italic" class="sf" opacity="0.85">18</text>
<text x="579.23" y="699.6" font-size="10" fill="#3e3b32" text-anchor="middle" font-weight="bold" font-style="italic" class="sf" opacity="0.85">19</text>
<text x="617.38" y="699.6" font-size="10" fill="#3e3b32" text-anchor="middle" font-weight="bold" font-style="italic" class="sf" opacity="0.85">20</text>
<text x="655.52" y="699.6" font-size="10" fill="#3e3b32" text-anchor="middle" font-weight="bold" font-style="italic" class="sf" opacity="0.85">21</text>
<text x="693.68" y="699.6" font-size="10" fill="#3e3b32" text-anchor="middle" font-weight="bold" font-style="italic" class="sf" opacity="0.85">22</text>
<text x="731.83" y="699.6" font-size="10" fill="#3e3b32" text-anchor="middle" font-weight="bold" font-style="italic" class="sf" opacity="0.85">23</text>
<text x="769.98" y="699.6" font-size="10" fill="#3e3b32" text-anchor="middle" font-weight="bold" font-style="italic" class="sf" opacity="0.85">24</text>
<text x="808.12" y="699.6" font-size="10" fill="#3e3b32" text-anchor="middle" font-weight="bold" font-style="italic" class="sf" opacity="0.85">1</text>
<text x="846.27" y="699.6" font-size="10" fill="#3e3b32" text-anchor="middle" font-weight="bold" font-style="italic" class="sf" opacity="0.85">2</text>
<text x="884.43" y="699.6" font-size="10" fill="#3e3b32" text-anchor="middle" font-weight="bold" font-style="italic" class="sf" opacity="0.85">3</text>
<text x="922.58" y="699.6" font-size="10" fill="#3e3b32" text-anchor="middle" font-weight="bold" font-style="italic" class="sf" opacity="0.85">4</text>
<text x="960.73" y="699.6" font-size="10" fill="#3e3b32" text-anchor="middle" font-weight="bold" font-style="italic" class="sf" opacity="0.85">5</text>
<text x="998.88" y="699.6" font-size="10" fill="#3e3b32" text-anchor="middle" font-weight="bold" font-style="italic" class="sf" opacity="0.85">6</text>
<text x="1037.02" y="699.6" font-size="10" fill="#3e3b32" text-anchor="middle" font-weight="bold" font-style="italic" class="sf" opacity="0.85">7</text>
<rect x="118.62" y="971.7" width="5.62" height="7.8" fill="#fde6b8" opacity="0.8" />
<text x="121.42" y="978.41" font-size="7.8" fill="#cfa55a" text-anchor="middle" opacity="0.8">0</text>
<rect x="118.62" y="946.14" width="5.62" height="7.8" fill="#fde6b8" opacity="0.8" />
<text x="121.42" y="952.85" font-size="7.8" fill="#cfa55a" text-anchor="middle" opacity="0.8">1</text>
<rect x="118.62" y="920.58" width="5.62" height="7.8" fill="#fde6b8" opacity="0.8" />
<text x="121.42" y="927.29" font-size="7.8" fill="#cfa55a" text-anchor="middle" opacity="0.8">2</text>
<rect x="118.62" y="895.02" width="5.62" height="7.8" fill="#fde6b8" opacity="0.8" />
<text x="121.42" y="901.73" font-size="7.8" fill="#cfa55a" text-anchor="middle" opacity="0.8">3</text>
<rect x="118.62" y="869.46" width="5.62" height="7.8" fill="#fde6b8" opacity="0.8" />
<text x="121.42" y="876.17" font-size="7.8" fill="#cfa55a" text-anchor="middle" opacity="0.8">4</text>
<rect x="118.62" y="843.9" width="5.62" height="7.8" fill="#fde6b8" opacity="0.8" />
<text x="121.42" y="850.61" font-size="7.8" fill="#cfa55a" text-anchor="middle" opacity="0.8">5</text>
<rect x="118.62" y="818.34" width="5.62" height="7.8" fill="#fde6b8" opacity="0.8" />
<text x="121.42" y="825.05" font-size="7.8" fill="#cfa55a" text-anchor="middle" opacity="0.8">6</text>
<rect x="118.62" y="792.78" width="5.62" height="7.8" fill="#fde6b8" opacity="0.8" />
<text x="121.42" y="799.49" font-size="7.8" fill="#cfa55a" text-anchor="middle" opacity="0.8">7</text>
<rect x="118.62" y="767.22" width="5.62" height="7.8" fill="#fde6b8" opacity="0.8" />
<text x="121.42" y="773.93" font-size="7.8" fill="#cfa55a" text-anchor="middle" opacity="0.8">8</text>
<rect x="118.62" y="741.66" width="5.62" height="7.8" fill="#fde6b8" opacity="0.8" />
<text x="121.42" y="748.37" font-size="7.8" fill="#cfa55a" text-anchor="middle" opacity="0.8">9</text>
<rect x="115.81" y="716.1" width="11.23" height="7.8" fill="#fde6b8" opacity="0.8" />
<text x="121.42" y="722.81" font-size="7.8" fill="#cfa55a" text-anchor="middle" opacity="0.8">10</text>
<rect x="347.52" y="971.7" width="5.62" height="7.8" fill="#fde6b8" opacity="0.8" />
<text x="350.32" y="978.41" font-size="7.8" fill="#cfa55a" text-anchor="middle" opacity="0.8">0</text>
<rect x="347.52" y="946.14" width="5.62" height="7.8" fill="#fde6b8" opacity="0.8" />
<text x="350.32" y="952.85" font-size="7.8" fill="#cfa55a" text-anchor="middle" opacity="0.8">1</text>
<rect x="347.52" y="920.58" width="5.62" height="7.8" fill="#fde6b8" opacity="0.8" />
<text x="350.32" y="927.29" font-size="7.8" fill="#cfa55a" text-anchor="middle" opacity="0.8">2</text>
<rect x="347.52" y="895.02" width="5.62" height="7.8" fill="#fde6b8" opacity="0.8" />
<text x="350.32" y="901.73" font-size="7.8" fill="#cfa55a" text-anchor="middle" opacity="0.8">3</text>
<rect x="347.52" y="869.46" width="5.62" height="7.8" fill="#fde6b8" opacity="0.8" />
<text x="350.32" y="876.17" font-size="7.8" fill="#cfa55a" text-anchor="middle" opacity="0.8">4</text>
<rect x="347.52" y="843.9" width="5.62" height="7.8" fill="#fde6b8" opacity="0.8" />
<text x="350.32" y="850.61" font-size="7.8" fill="#cfa55a" text-anchor="middle" opacity="0.8">5</text>
<rect x="347.52" y="818.34" width="5.62" height="7.8" fill="#fde6b8" opacity="0.8" />
<text x="350.32" y="825.05" font-size="7.8" fill="#cfa55a" text-anchor="middle" opacity="0.8">6</text>
<rect x="347.52" y="792.78" width="5.62" height="7.8" fill="#fde6b8" opacity="0.8" />
<text x="350.32" y="799.49" font-size="7.8" fill="#cfa55a" text-anchor="middle" opacity="0.8">7</text>
<rect x="347.52" y="767.22" width="5.62" height="7.8" fill="#fde6b8" opacity="0.8" />
<text x="350.32" y="773.93" font-size="7.8" fill="#cfa55a" text-anchor="middle" opacity="0.8">8</text>
<rect x="347.52" y="741.66" width="5.62" height="7.8" fill="#fde6b8" opacity="0.8" />
<text x="350.32" y="748.37" font-size="7.8" fill="#cfa55a" text-anchor="middle" opacity="0.8">9</text>
<rect x="344.71" y="716.1" width="11.23" height="7.8" fill="#fde6b8" opacity="0.8" />
<text x="350.32" y="722.81" font-size="7.8" fill="#cfa55a" text-anchor="middle" opacity="0.8">10</text>
<rect x="576.42" y="971.7" width="5.62" height="7.8" fill="#fde6b8" opacity="0.8" />
<text x="579.23" y="978.41" font-size="7.8" fill="#cfa55a" text-anchor="middle" opacity="0.8">0</text>
<rect x="576.42" y="946.14" width="5.62" height="7.8" fill="#fde6b8" opacity="0.8" />
<text x="579.23" y="952.85" font-size="7.8" fill="#cfa55a" text-anchor="middle" opacity="0.8">1</text>
<rect x="576.42" y="920.58" width="5.62" height="7.8" fill="#fde6b8" opacity="0.8" />
<text x="579.23" y="927.29" font-size="7.8" fill="#cfa55a" text-anchor="middle" opacity="0.8">2</text>
<rect x="576.42" y="895.02" width="5.62" height="7.8" fill="#fde6b8" opacity="0.8" />
<text x="579.23" y="901.73" font-size="7.8" fill="#cfa55a" text-anchor="middle" opacity="0.8">3</text>
<rect x="576.42" y="869.46" width="5.62" height="7.8" fill="#fde6b8" opacity="0.8" />
<text x="579.23" y="876.17" font-size="7.8" fill="#cfa55a" text-anchor="middle" opacity="0.8">4</text>
<rect x="576.42" y="843.9" width="5.62" height="7.8" fill="#fde6b8" opacity="0.8" />
<text x="579.23" y="850.61" font-size="7.8" fill="#cfa55a" text-anchor="middle" opacity="0.8">5</text>
<rect x="576.42" y="818.34" width="5.62" height="7.8" fill="#fde6b8" opacity="0.8" />
<text x="579.23" y="825.05" font-size="7.8" fill="#cfa55a" text-anchor="middle" opacity="0.8">6</text>
<rect x="576.42" y="792.78" width="5.62" height="7.8" fill="#fde6b8" opacity="0.8" />
<text x="579.23" y="799.49" font-size="7.8" fill="#cfa55a" text-anchor="middle" opacity="0.8">7</text>
<rect x="576.42" y="767.22" width="5.62" height="7.8" fill="#fde6b8" opacity="0.8" />
<text x="579.23" y="773.93" font-size="7.8" fill="#cfa55a" text-anchor="middle" opacity="0.8">8</text>
<rect x="576.42" y="741.66" width="5.62" height="7.8" fill="#fde6b8" opacity="0.8" />
<text x="579.23" y="748.37" font-size="7.8" fill="#cfa55a" text-anchor="middle" opacity="0.8">9</text>
<rect x="573.61" y="716.1" width="11.23" height="7.8" fill="#fde6b8" opacity="0.8" />
<text x="579.23" y="722.81" font-size="7.8" fill="#cfa55a" text-anchor="middle" opacity="0.8">10</text>
<rect x="805.32" y="971.7" width="5.62" height="7.8" fill="#fde6b8" opacity="0.8" />
<text x="808.12" y="978.41" font-size="7.8" fill="#cfa55a" text-anchor="middle" opacity="0.8">0</text>
<rect x="805.32" y="946.14" width="5.62" height="7.8" fill="#fde6b8" opacity="0.8" />
<text x="808.12" y="952.85" font-size="7.8" fill="#cfa55a" text-anchor="middle" opacity="0.8">1</text>
<rect x="805.32" y="920.58" width="5.62" height="7.8" fill="#fde6b8" opacity="0.8" />
<text x="808.12" y="927.29" font-size="7.8" fill="#cfa55a" text-anchor="middle" opacity="0.8">2</text>
<rect x="805.32" y="895.02" width="5.62" height="7.8" fill="#fde6b8" opacity="0.8" />
<text x="808.12" y="901.73" font-size="7.8" fill="#cfa55a" text-anchor="middle" opacity="0.8">3</text>
<rect x="805.32" y="869.46" width="5.62" height="7.8" fill="#fde6b8" opacity="0.8" />
<text x="808.12" y="876.17" font-size="7.8" fill="#cfa55a" text-anchor="middle" opacity="0.8">4</text>
<rect x="805.32" y="843.9" width="5.62" height="7.8" fill="#fde6b8" opacity="0.8" />
<text x="808.12" y="850.61" font-size="7.8" fill="#cfa55a" text-anchor="middle" opacity="0.8">5</text>
<rect x="805.32" y="818.34" width="5.62" height="7.8" fill="#fde6b8" opacity="0.8" />
<text x="808.12" y="825.05" font-size="7.8" fill="#cfa55a" text-anchor="middle" opacity="0.8">6</text>
<rect x="805.32" y="792.78" width="5.62" height="7.8" fill="#fde6b8" opacity="0.8" />
<text x="808.12" y="799.49" font-size="7.8" fill="#cfa55a" text-anchor="middle" opacity="0.8">7</text>
<rect x="805.32" y="767.22" width="5.62" height="7.8" fill="#fde6b8" opacity="0.8" />
<text x="808.12" y="773.93" font-size="7.8" fill="#cfa55a" text-anchor="middle" opacity="0.8">8</text>
<rect x="805.32" y="741.66" width="5.62" height="7.8" fill="#fde6b8" opacity="0.8" />
<text x="808.12" y="748.37" font-size="7.8" fill="#cfa55a" text-anchor="middle" opacity="0.8">9</text>
<rect x="802.51" y="716.1" width="11.23" height="7.8" fill="#fde6b8" opacity="0.8" />
<text x="808.12" y="722.81" font-size="7.8" fill="#cfa55a" text-anchor="middle" opacity="0.8">10</text>
<rect x="1034.22" y="971.7" width="5.62" height="7.8" fill="#fde6b8" opacity="0.8" />
<text x="1037.02" y="978.41" font-size="7.8" fill="#cfa55a" text-anchor="middle" opacity="0.8">0</text>
<rect x="1034.22" y="946.14" width="5.62" height="7.8" fill="#fde6b8" opacity="0.8" />
<text x="1037.02" y="952.85" font-size="7.8" fill="#cfa55a" text-anchor="middle" opacity="0.8">1</text>
<rect x="1034.22" y="920.58" width="5.62" height="7.8" fill="#fde6b8" opacity="0.8" />
<text x="1037.02" y="927.29" font-size="7.8" fill="#cfa55a" text-anchor="middle" opacity="0.8">2</text>
<rect x="1034.22" y="895.02" width="5.62" height="7.8" fill="#fde6b8" opacity="0.8" />
<text x="1037.02" y="901.73" font-size="7.8" fill="#cfa55a" text-anchor="middle" opacity="0.8">3</text>
<rect x="1034.22" y="869.46" width="5.62" height="7.8" fill="#fde6b8" opacity="0.8" />
<text x="1037.02" y="876.17" font-size="7.8" fill="#cfa55a" text-anchor="middle" opacity="0.8">4</text>
<rect x="1034.22" y="843.9" width="5.62" height="7.8" fill="#fde6b8" opacity="0.8" />
<text x="1037.02" y="850.61" font-size="7.8" fill="#cfa55a" text-anchor="middle" opacity="0.8">5</text>
<rect x="1034.22" y="818.34" width="5.62" height="7.8" fill="#fde6b8" opacity="0.8" />
<text x="1037.02" y="825.05" font-size="7.8" fill="#cfa55a" text-anchor="middle" opacity="0.8">6</text>
<rect x="1034.22" y="792.78" width="5.62" height="7.8" fill="#fde6b8" opacity="0.8" />
<text x="1037.02" y="799.49" font-size="7.8" fill="#cfa55a" text-anchor="middle" opacity="0.8">7</text>
<rect x="1034.22" y="767.22" width="5.62" height="7.8" fill="#fde6b8" opacity="0.8" />
<text x="1037.02" y="773.93" font-size="7.8" fill="#cfa55a" text-anchor="middle" opacity="0.8">8</text>
<rect x="1034.22" y="741.66" width="5.62" height="7.8" fill="#fde6b8" opacity="0.8" />
<text x="1037.02" y="748.37" font-size="7.8" fill="#cfa55a" text-anchor="middle" opacity="0.8">9</text>
<rect x="1031.41" y="716.1" width="11.23" height="7.8" fill="#fde6b8" opacity="0.8" />
<text x="1037.02" y="722.81" font-size="7.8" fill="#cfa55a" text-anchor="middle" opacity="0.8">10</text>
<text x="60" y="917.5" font-size="5.2" fill="#c4a058" textLength="162" lengthAdjust="spacingAndGlyphs" font-weight="bold" transform="rotate(-90 60 917.5)">A METTRE SOUS L'AUTRE EXTRÉMITÉ</text>
<text x="60" y="966" font-size="4.6" fill="#b8985a" textLength="15" lengthAdjust="spacingAndGlyphs" transform="rotate(-90 60 966)">125.N</text>
<text x="707" y="745.6" font-size="13.5" fill="#77756f" textLength="312" lengthAdjust="spacingAndGlyphs" font-style="italic" class="sf">Quantité d'Eau recueillie au Pluvio. Assoc : 4 m/m 7</text>
<text x="706.4" y="770.8" font-size="13.5" fill="#77756f" textLength="316" lengthAdjust="spacingAndGlyphs" font-style="italic" class="sf">Quantité d'Eau recueillie au Pluvio. Enreg : 4 m/m 7.</text>
<line x1="197.5" y1="716" x2="198.2" y2="976" stroke="#ee4a4a" stroke-width="1.1" opacity="0.85" />
<line x1="189.6" y1="705" x2="191" y2="712.5" stroke="#ee4a4a" stroke-width="1.4" opacity="0.8" />
<line x1="205.4" y1="695.5" x2="206.4" y2="710" stroke="#ee4a4a" stroke-width="1.4" opacity="0.8" />
<line x1="266.2" y1="731.5" x2="264.8" y2="745.5" stroke="#ec4c58" stroke-width="1.6" opacity="0.8" stroke-linecap="round"/>
<line x1="163.4" y1="782.5" x2="162.4" y2="787.5" stroke="#ec4c58" stroke-width="1.4" opacity="0.8" stroke-linecap="round"/>
<line x1="222" y1="833" x2="222.8" y2="858" stroke="#ec4c58" stroke-width="1.8" opacity="0.8" stroke-linecap="round"/>
<line x1="145" y1="915.6" x2="148.4" y2="918.6" stroke="#ec4c58" stroke-width="3.4" opacity="0.8" stroke-linecap="round"/>
<line x1="253" y1="921.5" x2="253.6" y2="934" stroke="#ec4c58" stroke-width="1.8" opacity="0.8" stroke-linecap="round"/>
<line x1="123.4" y1="886" x2="124.4" y2="890.5" stroke="#ec4c58" stroke-width="1.6" opacity="0.8" stroke-linecap="round"/>
<line x1="269.2" y1="769.6" x2="269.6" y2="771.4" stroke="#ec4c58" stroke-width="1.8" opacity="0.8" stroke-linecap="round"/>
<line x1="267.4" y1="785.6" x2="267.8" y2="787.2" stroke="#ec4c58" stroke-width="1.6" opacity="0.8" stroke-linecap="round"/>
<line x1="253" y1="816.6" x2="253.3" y2="819.4" stroke="#ec4c58" stroke-width="1.6" opacity="0.8" stroke-linecap="round"/>
<polyline points="198.5,975.3 300,975.5 378,975.3 381.5,974" fill="none" stroke="#ef6558" stroke-width="1.25" opacity="0.6" />
<polyline points="381.5,974 383.2,962 384.6,920 385.8,898 388,893.4 394,892.2 404,891.2 408,889.6 410.5,884 414,880.4 420,879.6 500,879.4 594.5,879 597,874 600.5,865 604.5,860.4 607,858.6 609,856.2 614,855.4 760,855 900,855.4 1041,855.2" fill="none" stroke="#ef6558" stroke-width="1.25" opacity="0.85" />
</svg>
<svg class="ov" width="1917" height="1035" viewBox="0 0 1917 1035" >
<g transform="translate(6 618)">
<path d="M0 0h4v1.6h-2.4v2.4h-1.6zM16 0h-4v1.6h2.4v2.4h1.6zM0 14h4v-1.6h-2.4v-2.4h-1.6zM16 14h-4v-1.6h2.4v-2.4h1.6z" fill="#4d6b86"/>
<rect x="1.7" y="1.4" width="12.6" height="11" fill="#cdeaf6" stroke="#5f7f9a" stroke-width="0.8" />
<rect x="3.1" y="3" width="9.8" height="7.9" fill="url(#icoPic)" />
<path d="M3.1 7.2 L6.5 6 L9.5 7.4 L12.9 7 V10.9 H3.1z" fill="#1f4d55" opacity=".85"/>
</g>
<text x="27.5" y="630" font-size="12" fill="#9a9a9a" textLength="336.5" lengthAdjust="spacingAndGlyphs">noumea_syphon_28121949.tif - Visionneuse de photos Windows</text>
<line x1="995" y1="625.5" x2="1005" y2="625.5" stroke="#8c8c8c" stroke-width="1" />
<rect x="1040.5" y="620.5" width="9" height="9" fill="none" stroke="#8c8c8c" stroke-width="1" />
<line x1="1086" y1="620" x2="1096" y2="630" stroke="#8c8c8c" stroke-width="1" />
<line x1="1096" y1="620" x2="1086" y2="630" stroke="#8c8c8c" stroke-width="1" />
<text x="8.4" y="659.5" font-size="12" fill="#1e2f52" textLength="34.6" lengthAdjust="spacingAndGlyphs">Fichier</text>
<path d="M53.1 652.5 h7 l-3.5 4z" fill="#1b1b2b"/>
<text x="76.3" y="659.5" font-size="12" fill="#1e2f52" textLength="46.8" lengthAdjust="spacingAndGlyphs">Imprimer</text>
<path d="M132.9 652.5 h7 l-3.5 4z" fill="#1b1b2b"/>
<text x="155.2" y="659.5" font-size="12" fill="#1e2f52" textLength="41.8" lengthAdjust="spacingAndGlyphs">Envoyer</text>
<text x="218.2" y="659.5" font-size="12" fill="#1e2f52" textLength="33.7" lengthAdjust="spacingAndGlyphs">Graver</text>
<path d="M261.9 652.5 h7 l-3.5 4z" fill="#1b1b2b"/>
<text x="284.2" y="659.5" font-size="12" fill="#1e2f52" textLength="32.8" lengthAdjust="spacingAndGlyphs">Ouvrir</text>
<path d="M326 652.5 h7 l-3.5 4z" fill="#1b1b2b"/>
<circle cx="1096" cy="653.8" r="8.2" fill="#c9d3e6" stroke="#8f9dbd" stroke-width=".8"/>
<circle cx="1096" cy="653.8" r="6.7" fill="url(#helpG)"/>
<text x="1096" y="658" font-size="11.5" fill="#fff" text-anchor="middle" font-weight="bold">?</text>
<rect x="354.5" y="994.5" width="404" height="30" fill="url(#pillG)" stroke="#aab3c2" stroke-width="1" rx="15" />
<rect x="483.5" y="997.4" width="145.4" height="24" fill="url(#navG)" stroke="#74787f" stroke-width="1" rx="10" />
<line x1="556" y1="997.5" x2="556" y2="1021.5" stroke="#8a8f98" stroke-width="1" />
<circle cx="556" cy="1009.3" r="24" fill="#f6f7fb" stroke="#b4bac8" stroke-width="1"/>
<circle cx="556" cy="1009.3" r="20" fill="url(#ballG)" stroke="#0e1a86" stroke-width="1"/>
<rect x="545" y="1000.3" width="22" height="18.4" fill="#eef0f4" stroke="#fbfcfd" stroke-width="1" rx="1.6" />
<rect x="548.4" y="1004.3" width="15.2" height="10.4" fill="url(#picG)" />
<rect x="548.6" y="1016.2" width="14.6" height="1.2" fill="#b9bfc8" />
<circle cx="394.3" cy="1007.6" r="5.5" fill="#fff" stroke="#1a399e" stroke-width="2.3"/>
<path d="M390 1012l-4.8 4.4" stroke="#1a399e" stroke-width="3.1" stroke-linecap="round"/>
<path d="M391.8 1007.6h5M394.3 1005.1v5" stroke="#1a399e" stroke-width="1.6"/>
<path d="M406.4 1008.1h6.8l-3.4 3.8z" fill="#1a399e"/>
<rect x="448.1" y="1007" width="7" height="4.8" fill="#fff" stroke="#1a399e" stroke-width="2" />
<path d="M448.6 1002.1h5.6l-2.8 2.5zM448.4 1017h6l-3-2.8zM442.8 1006.7v5.6l2.8-2.8zM460 1006.7v5.6l-2.8-2.8z" fill="#1a399e"/>
<path d="M500.8 1004h2.7v11h-2.7zM515.4 1004v11l-11-5.5z" fill="#1a399e"/>
<path d="M608.4 1004h2.7v11h-2.7zM596.8 1004v11l10.4-5.5z" fill="#1a399e"/>
<path d="M654 1005A5.2 5.2 0 1 1 648.7 1010.4" fill="none" stroke="url(#rotG)" stroke-width="2.9"/><path d="M647.2 1005l5.9-3.7v7.2z" fill="#1f66cc"/>
<g transform="translate(1340.5 0) scale(-1 1)"><path d="M654 1005A5.2 5.2 0 1 1 648.7 1010.4" fill="none" stroke="url(#rotG)" stroke-width="2.9"/><path d="M647.2 1005l5.9-3.7v7.2z" fill="#1f66cc"/></g>
<line x1="710.5" y1="1000.4" x2="710.5" y2="1018.2" stroke="#bcbfc8" stroke-width="1" />
<path d="M726.4 1002.2l12.4 12.8M738.8 1002.2l-12.4 12.8" stroke="#c41a30" stroke-width="2.1" fill="none"/>
</svg>
</div>
<div class="win" id="winC">
<div class="pbody" style="left:1116px;top:32px;width:801px;height:558px;"></div>
<div class="ptitle" style="left:1116px;top:0px;width:801px;height:32px;"></div>
<div class="bluebox" style="left:1116px;top:32px;width:68px;height:48px;"></div>
<div class="shadow" style="left:1116px;top:574px;width:801px;height:16px;background:linear-gradient(rgba(90,90,90,0) 0,rgba(90,90,90,.05) 55%,rgba(90,90,90,.21) 100%);"></div>
<div class="redge" style="left:1915px;top:32px;width:2px;height:558px;background:linear-gradient(90deg,#e4e4e4,#c4c4c4);"></div>
<svg class="ov" width="1917" height="1035" viewBox="0 0 1917 1035" >
<text x="1128" y="21.4" font-size="12" fill="#1a1a1a" textLength="371.6" lengthAdjust="spacingAndGlyphs">Photos - 1949-11-09--1--noumea_syphon_09111949--pluvio-6min.jpg</text>
<line x1="1795" y1="16.5" x2="1805" y2="16.5" stroke="#b5b5b5" stroke-width="1" />
<rect x="1841.5" y="11.5" width="9" height="9" fill="none" stroke="#b5b5b5" stroke-width="1" />
<line x1="1887" y1="11" x2="1897" y2="21" stroke="#b5b5b5" stroke-width="1" /><line x1="1897" y1="11" x2="1887" y2="21" stroke="#b5b5b5" stroke-width="1" />
<g transform="translate(0 0)" fill="none" stroke="#111" stroke-width="1.25">
<g stroke="none" transform="translate(0 0)">
<rect x="1140" y="46" width="20" height="20" fill="#fff" />
<path d="M1141.2 47.2h17.6v11.8l-3.3-6.2-2.6 4.2-5.6-8.2-6.1 11.6z" fill="#0078d7"/>
<path d="M1152.8 57.2l2.2 3.9" stroke="#0078d7" stroke-width="1" />
</g>
<path d="M1208 56h20M1218 46v20" stroke-width="1.6" transform="translate(0 0)"/>
<circle cx="1410.6" cy="52.6" r="6.2"/>
<path d="M1415.2 57.2l8.8 8.6M1407.6 52.6h6M1410.6 49.6v6"/>
<path d="M1473.4 49.2h16M1478.6 49v-2.4h5.4v2.4M1475 49.2v14.6q0 1.6 1.6 1.6h9.4q1.6 0 1.6-1.6v-14.6M1478.8 52v10M1481.4 52v10M1484 52v10"/>
<path d="M1540.4 55.6a9.6 9.6 0 1 1 14.2 8.6"/>
<path d="M1558.6 64.6h-4.6v-4.6" />
<rect x="1548.5" y="54.3" width="3" height="3" fill="none" stroke="#111" stroke-width="1.2" />
<path d="M1612.4 46.3v15.2h15.8M1608.4 50.3h15.2v15.6M1612.6 61.3l14.4-14.4"/>
<g stroke-width="1.05" fill="#fff">
<g transform="rotate(43 1690.8 56.9)"><path d="M1682.6 55.6h13.4l4 1.3-4 1.3h-13.4z"/><path d="M1696 55.6v2.6" /><circle cx="1682.4" cy="56.9" r="1.9"/></g>
<g transform="rotate(-43 1690 56.6)"><path d="M1681 55.2h17.6q1.2 1.4 0 2.8h-17.6z"/><path d="M1683.4 55.2v2.8"/><path d="M1681 55.2l-1.8 1.4 1.8 1.4" /></g>
</g>
<path d="M1708.6 52.2l3.3 3.3 3.3-3.3" stroke="#2d74b8" stroke-width="1.5"/>
<path d="M1758.6 53.2v8.2h11.8v-3.2M1761.4 58.6q.6-5.6 7-6.2v-3.4l4.6 4.9-4.6 4.9v-3.4q-4.2-.2-7 3.2z" stroke-width="1.15"/>
<path d="M1830 54v-5.6h8v5.6M1830 60.2h-3.4v-6.2h14.8v6.2h-3.4M1830 58h8v5.4h-8z" stroke-width="1.2"/>
<g stroke="none" fill="#111"><rect x="1885" y="55.8" width="2" height="2" fill="#111" /><rect x="1891" y="55.8" width="2" height="2" fill="#111" /><rect x="1897.2" y="55.8" width="2" height="2" fill="#111" /></g>
</g>
<g>
<path d="M1251 120.7V179.9H1726.7" fill="none" stroke="#3a3a3a" stroke-width="0.7"/>
<text x="1248.47" y="122.36" font-size="4.6" fill="#484848" text-anchor="end" opacity="0.85">15</text>
<text x="1248.47" y="137.03" font-size="4.6" fill="#484848" text-anchor="end" opacity="0.85">10</text>
<text x="1248.47" y="151.69" font-size="4.6" fill="#484848" text-anchor="end" opacity="0.85">5</text>
<text x="1248.47" y="166.36" font-size="4.6" fill="#484848" text-anchor="end" opacity="0.85">0</text>
<text x="1248.47" y="181.02" font-size="4.6" fill="#484848" text-anchor="end" opacity="0.85">-5</text>
<text x="1283.1" y="187.95" font-size="4.6" fill="#484848" textLength="28.6" lengthAdjust="spacingAndGlyphs" opacity="0.85">09-Nov-1949</text>
<text x="1379.2" y="187.95" font-size="4.6" fill="#484848" textLength="28.6" lengthAdjust="spacingAndGlyphs" opacity="0.85">09-Nov-1949</text>
<text x="1474.4" y="187.95" font-size="4.6" fill="#484848" textLength="28.6" lengthAdjust="spacingAndGlyphs" opacity="0.85">09-Nov-1949</text>
<text x="1569.7" y="187.95" font-size="4.6" fill="#484848" textLength="28.6" lengthAdjust="spacingAndGlyphs" opacity="0.85">10-Nov-1949</text>
<text x="1665.5" y="187.95" font-size="4.6" fill="#484848" textLength="28.6" lengthAdjust="spacingAndGlyphs" opacity="0.85">10-Nov-1949</text>
<path d="M1251 120.7h3M1251 135.37h3M1251 150.03h3M1251 164.7h3M1251 179.36h3M1297.4 179.9v-3.6M1393.5 179.9v-3.6M1488.7 179.9v-3.6M1584 179.9v-3.6M1679.8 179.9v-3.6" fill="none" stroke="#3a3a3a" stroke-width="0.7"/>
<polyline points="1251,164.7 1552.8,164.7 1555,160.3 1558,158.83 1565,158.69 1567,154.14 1570,152.67 1583,152.53 1584.5,144.17 1587,139.18 1620,139.04 1663,138.74 1664.6,133.9 1666.2,150.03 1667.2,165.58 1668.6,157.07 1671,154.14 1675,152.67 1681,151.94 1719,151.79" fill="none" stroke="#222" stroke-width="1.2" opacity="0.45" stroke-dasharray="1.1 .9"/>
<polyline points="1251,164.7 1552.8,164.7 1555,160.3 1558,158.83 1565,158.69 1567,154.14 1570,152.67 1583,152.53 1584.5,144.17 1587,139.18 1620,139.04 1663,138.74 1664.6,133.9 1666.2,150.03 1667.2,165.58 1668.6,157.07 1671,154.14 1675,152.67 1681,151.94 1719,151.79" fill="none" stroke="#111" stroke-width="0.65" />
<rect x="1742" y="134.4" width="80.4" height="31.7" fill="#fff" stroke="#3a3a3a" stroke-width="0.7" />
<line x1="1750.04" y1="139.79" x2="1786.22" y2="139.79" stroke="#d99" stroke-width="0.6" stroke-dasharray=".6 .8"/>
<text x="1790.24" y="141.59" font-size="5" fill="#484848" opacity="0.85">Min</text>
<line x1="1750.04" y1="146.76" x2="1786.22" y2="146.76" stroke="#88c" stroke-width="0.6" stroke-dasharray=".6 .8"/>
<text x="1790.24" y="148.56" font-size="5" fill="#484848" opacity="0.85">Bary</text>
<line x1="1750.04" y1="153.74" x2="1786.22" y2="153.74" stroke="#c99" stroke-width="0.6" stroke-dasharray=".6 .8"/>
<text x="1790.24" y="155.54" font-size="5" fill="#484848" opacity="0.85">Max</text>
<line x1="1750.04" y1="160.71" x2="1786.22" y2="160.71" stroke="#333" stroke-width="0.5" />
<text x="1790.24" y="162.51" font-size="5" fill="#484848" opacity="0.85">Interpolation</text>
<path d="M1251 213.6V272.1H1726.7" fill="none" stroke="#3a3a3a" stroke-width="0.7"/>
<text x="1248.47" y="221.76" font-size="4.6" fill="#484848" text-anchor="end" opacity="0.85">1</text>
<text x="1248.47" y="233.13" font-size="4.6" fill="#484848" text-anchor="end" opacity="0.85">0.5</text>
<text x="1248.47" y="244.51" font-size="4.6" fill="#484848" text-anchor="end" opacity="0.85">0</text>
<text x="1248.47" y="255.88" font-size="4.6" fill="#484848" text-anchor="end" opacity="0.85">-0.5</text>
<text x="1248.47" y="267.26" font-size="4.6" fill="#484848" text-anchor="end" opacity="0.85">-1</text>
<text x="1272.1" y="281.45" font-size="4.6" fill="#484848" textLength="50.6" lengthAdjust="spacingAndGlyphs" opacity="0.85">09-Nov-1949 09:36:00</text>
<text x="1368.2" y="281.45" font-size="4.6" fill="#484848" textLength="50.6" lengthAdjust="spacingAndGlyphs" opacity="0.85">09-Nov-1949 14:24:00</text>
<text x="1463.4" y="281.45" font-size="4.6" fill="#484848" textLength="50.6" lengthAdjust="spacingAndGlyphs" opacity="0.85">09-Nov-1949 19:12:00</text>
<text x="1558.7" y="281.45" font-size="4.6" fill="#484848" textLength="50.6" lengthAdjust="spacingAndGlyphs" opacity="0.85">10-Nov-1949 00:00:00</text>
<text x="1654.5" y="281.45" font-size="4.6" fill="#484848" textLength="50.6" lengthAdjust="spacingAndGlyphs" opacity="0.85">10-Nov-1949 04:48:00</text>
<path d="M1251 220.1h3M1251 231.47h3M1251 242.85h3M1251 254.22h3M1251 265.6h3M1297.4 272.1v-3.6M1393.5 272.1v-3.6M1488.7 272.1v-3.6M1584 272.1v-3.6M1679.8 272.1v-3.6" fill="none" stroke="#3a3a3a" stroke-width="0.7"/>
<polyline points="1250.2,265.6 1664.7,220.1 1667.1,265.6 1718.6,220.1" fill="none" stroke="#1d1de0" stroke-width="1.35" />
<circle cx="1250.2" cy="265.6" r="2.9" fill="none" stroke="#1d1de0" stroke-width="1"/>
<circle cx="1664.7" cy="220.1" r="2.9" fill="none" stroke="#1d1de0" stroke-width="1"/>
<circle cx="1667.1" cy="265.6" r="2.9" fill="none" stroke="#1d1de0" stroke-width="1"/>
<circle cx="1718.6" cy="220.1" r="2.9" fill="none" stroke="#1d1de0" stroke-width="1"/>
<text x="1457" y="216.4" font-size="5.4" fill="#333" text-anchor="middle">1</text>
<text x="1692.8" y="216.4" font-size="5.4" fill="#333" text-anchor="middle">3</text>
<text x="1664.6" y="276" font-size="4.6" fill="#484848" text-anchor="middle">2</text>
<rect x="1741.5" y="237.3" width="80.7" height="11.7" fill="#fff" stroke="#3a3a3a" stroke-width="0.7" />
<line x1="1749.57" y1="243.15" x2="1785.88" y2="243.15" stroke="#1d1de0" stroke-width="1" />
<circle cx="1767.73" cy="243.15" r="3" fill="none" stroke="#1d1de0" stroke-width=".9"/>
<text x="1789.92" y="244.95" font-size="5" fill="#484848" opacity="0.85">Sens Finaux</text>
<text x="1392.62" y="287" font-size="9" fill="#111" textLength="5.56" lengthAdjust="spacingAndGlyphs">1</text>
<text x="1393.68" y="295.1" font-size="9" fill="#111" textLength="19.45" lengthAdjust="spacingAndGlyphs">10.1</text>
<text x="1393.68" y="303.2" font-size="9" fill="#111" textLength="19.45" lengthAdjust="spacingAndGlyphs">10.1</text>
<text x="1536.02" y="287" font-size="9" fill="#111" textLength="5.56" lengthAdjust="spacingAndGlyphs">2</text>
<text x="1544.62" y="295.1" font-size="9" fill="#111" textLength="5.56" lengthAdjust="spacingAndGlyphs">0</text>
<text x="1544.62" y="303.2" font-size="9" fill="#111" textLength="5.56" lengthAdjust="spacingAndGlyphs">0</text>
<text x="1678.82" y="287" font-size="9" fill="#111" textLength="5.56" lengthAdjust="spacingAndGlyphs">3</text>
<text x="1681.65" y="295.1" font-size="9" fill="#111" textLength="13.89" lengthAdjust="spacingAndGlyphs">4.4</text>
<text x="1681.65" y="303.2" font-size="9" fill="#111" textLength="13.89" lengthAdjust="spacingAndGlyphs">4.4</text>
<text x="1726.7" y="287" font-size="9" fill="#111" textLength="97.2" lengthAdjust="spacingAndGlyphs">Oeil Numérisateur: 14</text>
<text x="1726.7" y="295.1" font-size="9" fill="#111" textLength="97.2" lengthAdjust="spacingAndGlyphs">NUNIEAU direct: 14.5</text>
<text x="1726.7" y="303.2" font-size="9" fill="#111" textLength="100.8" lengthAdjust="spacingAndGlyphs">NUNIEAU normé: 14.5</text>
<path d="M1251 306.2V365H1727" fill="none" stroke="#3a3a3a" stroke-width="0.7"/>
<text x="1248.47" y="307.86" font-size="4.6" fill="#484848" text-anchor="end" opacity="0.85">10</text>
<text x="1248.47" y="319.62" font-size="4.6" fill="#484848" text-anchor="end" opacity="0.85">8</text>
<text x="1248.47" y="331.38" font-size="4.6" fill="#484848" text-anchor="end" opacity="0.85">6</text>
<text x="1248.47" y="343.14" font-size="4.6" fill="#484848" text-anchor="end" opacity="0.85">4</text>
<text x="1248.47" y="354.9" font-size="4.6" fill="#484848" text-anchor="end" opacity="0.85">2</text>
<text x="1248.47" y="366.66" font-size="4.6" fill="#484848" text-anchor="end" opacity="0.85">0</text>
<text x="1283.1" y="373.05" font-size="4.6" fill="#484848" textLength="28.6" lengthAdjust="spacingAndGlyphs" opacity="0.85">09-Nov-1949</text>
<text x="1379.2" y="373.05" font-size="4.6" fill="#484848" textLength="28.6" lengthAdjust="spacingAndGlyphs" opacity="0.85">09-Nov-1949</text>
<text x="1474.4" y="373.05" font-size="4.6" fill="#484848" textLength="28.6" lengthAdjust="spacingAndGlyphs" opacity="0.85">09-Nov-1949</text>
<text x="1569.7" y="373.05" font-size="4.6" fill="#484848" textLength="28.6" lengthAdjust="spacingAndGlyphs" opacity="0.85">10-Nov-1949</text>
<text x="1665.5" y="373.05" font-size="4.6" fill="#484848" textLength="28.6" lengthAdjust="spacingAndGlyphs" opacity="0.85">10-Nov-1949</text>
<path d="M1251 306.2h3M1251 317.96h3M1251 329.72h3M1251 341.48h3M1251 353.24h3M1251 365h3M1297.4 365v-3.6M1393.5 365v-3.6M1488.7 365v-3.6M1584 365v-3.6M1679.8 365v-3.6" fill="none" stroke="#3a3a3a" stroke-width="0.7"/>
<rect x="1555.15" y="357.94" width="1.7" height="7.06" fill="#fff" stroke="#22dd33" stroke-width="0.6" />
<rect x="1567.15" y="359.12" width="1.7" height="5.88" fill="#fff" stroke="#22dd33" stroke-width="0.6" />
<rect x="1584.05" y="342.66" width="1.7" height="22.34" fill="#fff" stroke="#22dd33" stroke-width="0.6" />
<rect x="1585.95" y="361.47" width="1.7" height="3.53" fill="#fff" stroke="#22dd33" stroke-width="0.6" />
<rect x="1666.65" y="353.24" width="1.7" height="11.76" fill="#fff" stroke="#22dd33" stroke-width="0.6" />
<rect x="1668.75" y="357.94" width="1.7" height="7.06" fill="#fff" stroke="#22dd33" stroke-width="0.6" />
<rect x="1670.75" y="362.65" width="1.7" height="2.35" fill="#fff" stroke="#22dd33" stroke-width="0.6" />
<rect x="1556.55" y="360.3" width="1.7" height="4.7" fill="#fff" stroke="#2233ee" stroke-width="0.6" />
<rect x="1568.55" y="359.12" width="1.7" height="5.88" fill="#fff" stroke="#2233ee" stroke-width="0.6" />
<rect x="1584.35" y="352.06" width="1.7" height="12.94" fill="#fff" stroke="#2233ee" stroke-width="0.6" />
<rect x="1586.75" y="362.06" width="1.7" height="2.94" fill="#fff" stroke="#2233ee" stroke-width="0.6" />
<rect x="1668.15" y="361.47" width="1.7" height="3.53" fill="#fff" stroke="#2233ee" stroke-width="0.6" />
<rect x="1677.75" y="362.06" width="1.7" height="2.94" fill="#fff" stroke="#2233ee" stroke-width="0.6" />
<rect x="1673.15" y="363.24" width="1.7" height="1.76" fill="#fff" stroke="#2233ee" stroke-width="0.6" />
<rect x="1675.55" y="363.24" width="1.7" height="1.76" fill="#fff" stroke="#2233ee" stroke-width="0.6" />
<rect x="1551.75" y="361.47" width="1.7" height="3.53" fill="#fff" stroke="#ee2222" stroke-width="0.6" />
<rect x="1553.55" y="359.12" width="1.7" height="5.88" fill="#fff" stroke="#ee2222" stroke-width="0.6" />
<rect x="1564.75" y="357.36" width="1.7" height="7.64" fill="#fff" stroke="#ee2222" stroke-width="0.6" />
<rect x="1566.55" y="359.71" width="1.7" height="5.29" fill="#fff" stroke="#ee2222" stroke-width="0.6" />
<rect x="1581.95" y="343.24" width="1.7" height="21.76" fill="#fff" stroke="#ee2222" stroke-width="0.6" />
<rect x="1579.95" y="363.24" width="1.7" height="1.76" fill="#fff" stroke="#ee2222" stroke-width="0.6" />
<rect x="1662.95" y="357.36" width="1.7" height="7.64" fill="#fff" stroke="#ee2222" stroke-width="0.6" />
<rect x="1671.95" y="363.24" width="1.7" height="1.76" fill="#fff" stroke="#ee2222" stroke-width="0.6" />
<rect x="1679.55" y="363.53" width="1.7" height="1.47" fill="#fff" stroke="#ee2222" stroke-width="0.6" />
<line x1="1251" y1="365" x2="1727" y2="365" stroke="#ee2222" stroke-width="0.7" />
<rect x="1741.5" y="323.7" width="80.9" height="24.8" fill="#fff" stroke="#3a3a3a" stroke-width="0.7" />
<rect x="1749.59" y="325.38" width="36.41" height="5.07" fill="#fff" stroke="#22dd33" stroke-width="0.7" />
<text x="1790.04" y="329.72" font-size="5" fill="#484848" opacity="0.85">Diff des min</text>
<rect x="1749.59" y="333.56" width="36.41" height="5.07" fill="#fff" stroke="#2233ee" stroke-width="0.7" />
<text x="1790.04" y="337.9" font-size="5" fill="#484848" opacity="0.85">Diff des bary</text>
<rect x="1749.59" y="341.75" width="36.41" height="5.07" fill="#fff" stroke="#ee2222" stroke-width="0.7" />
<text x="1790.04" y="346.08" font-size="5" fill="#484848" opacity="0.85">Diff des max</text>
<rect x="1251" y="399.1" width="478.4" height="59.2" fill="none" stroke="#3a3a3a" stroke-width="0.7" />
<text x="1248.47" y="400.76" font-size="4.6" fill="#484848" text-anchor="end" opacity="0.85">4</text>
<text x="1248.47" y="415.56" font-size="4.6" fill="#484848" text-anchor="end" opacity="0.85">3</text>
<text x="1248.47" y="430.36" font-size="4.6" fill="#484848" text-anchor="end" opacity="0.85">2</text>
<text x="1248.47" y="445.16" font-size="4.6" fill="#484848" text-anchor="end" opacity="0.85">1</text>
<text x="1248.47" y="459.96" font-size="4.6" fill="#484848" text-anchor="end" opacity="0.85">0</text>
<text x="1283.1" y="466.35" font-size="4.6" fill="#484848" textLength="28.6" lengthAdjust="spacingAndGlyphs" opacity="0.85">09-Nov-1949</text>
<text x="1379.2" y="466.35" font-size="4.6" fill="#484848" textLength="28.6" lengthAdjust="spacingAndGlyphs" opacity="0.85">09-Nov-1949</text>
<text x="1475.2" y="466.35" font-size="4.6" fill="#484848" textLength="28.6" lengthAdjust="spacingAndGlyphs" opacity="0.85">09-Nov-1949</text>
<text x="1570.6" y="466.35" font-size="4.6" fill="#484848" textLength="28.6" lengthAdjust="spacingAndGlyphs" opacity="0.85">10-Nov-1949</text>
<text x="1666.6" y="466.35" font-size="4.6" fill="#484848" textLength="28.6" lengthAdjust="spacingAndGlyphs" opacity="0.85">10-Nov-1949</text>
<path d="M1251 399.1h3M1729.4 399.1h-3M1251 413.9h3M1729.4 413.9h-3M1251 428.7h3M1729.4 428.7h-3M1251 443.5h3M1729.4 443.5h-3M1251 458.3h3M1729.4 458.3h-3M1297.4 458.3v-3.6M1297.4 399.1v3.6M1393.5 458.3v-3.6M1393.5 399.1v3.6M1489.5 458.3v-3.6M1489.5 399.1v3.6M1584.9 458.3v-3.6M1584.9 399.1v3.6M1680.9 458.3v-3.6M1680.9 399.1v3.6" fill="none" stroke="#3a3a3a" stroke-width="0.7"/>
<rect x="1552.95" y="453.86" width="1.9" height="4.44" fill="#fff" stroke="#111" stroke-width="0.6" />
<rect x="1554.95" y="444.98" width="1.9" height="13.32" fill="#fff" stroke="#111" stroke-width="0.6" />
<rect x="1557.35" y="448.68" width="1.9" height="9.62" fill="#fff" stroke="#111" stroke-width="0.6" />
<rect x="1565.35" y="449.42" width="1.9" height="8.88" fill="#fff" stroke="#111" stroke-width="0.6" />
<rect x="1567.35" y="442.76" width="1.9" height="15.54" fill="#fff" stroke="#111" stroke-width="0.6" />
<rect x="1569.45" y="452.38" width="1.9" height="5.92" fill="#fff" stroke="#111" stroke-width="0.6" />
<rect x="1583.25" y="428.7" width="1.9" height="29.6" fill="#fff" stroke="#111" stroke-width="0.6" />
<rect x="1585.25" y="427.22" width="1.9" height="31.08" fill="#fff" stroke="#111" stroke-width="0.6" />
<rect x="1587.35" y="453.12" width="1.9" height="5.18" fill="#fff" stroke="#111" stroke-width="0.6" />
<rect x="1589.25" y="457.41" width="1.9" height="0.89" fill="#fff" stroke="#111" stroke-width="0.6" />
<rect x="1665.15" y="439.06" width="1.9" height="19.24" fill="#fff" stroke="#111" stroke-width="0.6" />
<rect x="1669.25" y="416.86" width="1.9" height="41.44" fill="#fff" stroke="#111" stroke-width="0.6" />
<rect x="1671.35" y="448.68" width="1.9" height="9.62" fill="#fff" stroke="#111" stroke-width="0.6" />
<rect x="1673.45" y="456.08" width="1.9" height="2.22" fill="#fff" stroke="#111" stroke-width="0.6" />
<rect x="1675.45" y="455.34" width="1.9" height="2.96" fill="#fff" stroke="#111" stroke-width="0.6" />
<rect x="1677.55" y="453.86" width="1.9" height="4.44" fill="#fff" stroke="#111" stroke-width="0.6" />
<rect x="1679.65" y="454.6" width="1.9" height="3.7" fill="#fff" stroke="#111" stroke-width="0.6" />
<rect x="1681.65" y="456.82" width="1.9" height="1.48" fill="#fff" stroke="#111" stroke-width="0.6" />
<rect x="1744.2" y="423.6" width="78.2" height="11" fill="#fff" stroke="#3a3a3a" stroke-width="0.7" />
<rect x="1752.02" y="427.4" width="35.19" height="3.41" fill="#fff" stroke="#222" stroke-width="0.7" />
<text x="1791.12" y="430.9" font-size="5" fill="#484848" opacity="0.85">Lame 6mn</text>
<rect x="1251" y="492" width="474" height="66.8" fill="none" stroke="#3a3a3a" stroke-width="0.7" />
<text x="1248.47" y="493.66" font-size="4.6" fill="#484848" text-anchor="end" opacity="0.85">20</text>
<text x="1248.47" y="510.36" font-size="4.6" fill="#484848" text-anchor="end" opacity="0.85">15</text>
<text x="1248.47" y="527.06" font-size="4.6" fill="#484848" text-anchor="end" opacity="0.85">10</text>
<text x="1248.47" y="543.76" font-size="4.6" fill="#484848" text-anchor="end" opacity="0.85">5</text>
<text x="1248.47" y="560.46" font-size="4.6" fill="#484848" text-anchor="end" opacity="0.85">0</text>
<text x="1283.1" y="566.85" font-size="4.6" fill="#484848" textLength="28.6" lengthAdjust="spacingAndGlyphs" opacity="0.85">09-Nov-1949</text>
<text x="1378.1" y="566.85" font-size="4.6" fill="#484848" textLength="28.6" lengthAdjust="spacingAndGlyphs" opacity="0.85">09-Nov-1949</text>
<text x="1473.1" y="566.85" font-size="4.6" fill="#484848" textLength="28.6" lengthAdjust="spacingAndGlyphs" opacity="0.85">09-Nov-1949</text>
<text x="1567.8" y="566.85" font-size="4.6" fill="#484848" textLength="28.6" lengthAdjust="spacingAndGlyphs" opacity="0.85">10-Nov-1949</text>
<text x="1663.2" y="566.85" font-size="4.6" fill="#484848" textLength="28.6" lengthAdjust="spacingAndGlyphs" opacity="0.85">10-Nov-1949</text>
<path d="M1251 492h3M1725 492h-3M1251 508.7h3M1725 508.7h-3M1251 525.4h3M1725 525.4h-3M1251 542.1h3M1725 542.1h-3M1251 558.8h3M1725 558.8h-3M1297.4 558.8v-3.6M1297.4 492v3.6M1392.4 558.8v-3.6M1392.4 492v3.6M1487.4 558.8v-3.6M1487.4 492v3.6M1582.1 558.8v-3.6M1582.1 492v3.6M1677.5 558.8v-3.6M1677.5 492v3.6" fill="none" stroke="#3a3a3a" stroke-width="0.7"/>
<polyline points="1251,558.8 1551,558.8 1553.6,554.12 1556,552.12 1562,551.95 1564.6,546.78 1567,545.11 1580,544.94 1582.4,535.42 1585,529.74 1661.3,529.24 1663,525.4 1665,524.73 1667,516.72 1669,513.71 1674,511.71 1680,510.37 1716.4,510.37" fill="none" stroke="#2222dd" stroke-width="0.75" />
<rect x="1739.8" y="520" width="82.6" height="11.3" fill="#fff" stroke="#3a3a3a" stroke-width="0.7" />
<line x1="1748.06" y1="525.65" x2="1785.23" y2="525.65" stroke="#2222dd" stroke-width="0.5" />
<text x="1789.36" y="527.45" font-size="5" fill="#484848" opacity="0.85">Volume Pluie</text>
</g>
</svg>
</div>
<div class="win" id="winD">
<div class="pbody" style="left:1116.2px;top:590px;width:800.8px;height:445px;border-left:1px solid #5c5e62;border-top:1px solid #4a4a4a;box-sizing:border-box;"></div>
<div class="ptitle act" style="left:1117px;top:591px;width:800px;height:32px;"></div>
<div class="bluebox" style="left:1117px;top:623px;width:68px;height:48px;"></div>
<svg class="ov" width="1917" height="1035" viewBox="0 0 1917 1035" >
<text x="1129.4" y="612" font-size="12" fill="#111" textLength="371.6" lengthAdjust="spacingAndGlyphs">Photos - 1949-12-28--1--noumea_syphon_28121949--pluvio-6min.jpg</text>
<line x1="1798" y1="607.5" x2="1808" y2="607.5" stroke="#111" stroke-width="1.1" />
<rect x="1844.5" y="602.5" width="9" height="9" fill="none" stroke="#111" stroke-width="1.1" />
<line x1="1890" y1="602" x2="1900" y2="612" stroke="#111" stroke-width="1.1" /><line x1="1900" y1="602" x2="1890" y2="612" stroke="#111" stroke-width="1.1" />
<g transform="translate(2 591)" fill="none" stroke="#111" stroke-width="1.25">
<g stroke="none" transform="translate(-1.2 0)">
<rect x="1140" y="46" width="20" height="20" fill="#fff" />
<path d="M1141.2 47.2h17.6v11.8l-3.3-6.2-2.6 4.2-5.6-8.2-6.1 11.6z" fill="#0078d7"/>
<path d="M1152.8 57.2l2.2 3.9" stroke="#0078d7" stroke-width="1" />
</g>
<path d="M1208 56h20M1218 46v20" stroke-width="1.6" transform="translate(-1.2 0)"/>
<circle cx="1410.6" cy="52.6" r="6.2"/>
<path d="M1415.2 57.2l8.8 8.6M1407.6 52.6h6M1410.6 49.6v6"/>
<path d="M1473.4 49.2h16M1478.6 49v-2.4h5.4v2.4M1475 49.2v14.6q0 1.6 1.6 1.6h9.4q1.6 0 1.6-1.6v-14.6M1478.8 52v10M1481.4 52v10M1484 52v10"/>
<path d="M1540.4 55.6a9.6 9.6 0 1 1 14.2 8.6"/>
<path d="M1558.6 64.6h-4.6v-4.6" />
<rect x="1548.5" y="54.3" width="3" height="3" fill="none" stroke="#111" stroke-width="1.2" />
<path d="M1612.4 46.3v15.2h15.8M1608.4 50.3h15.2v15.6M1612.6 61.3l14.4-14.4"/>
<g stroke-width="1.05" fill="#fff">
<g transform="rotate(43 1690.8 56.9)"><path d="M1682.6 55.6h13.4l4 1.3-4 1.3h-13.4z"/><path d="M1696 55.6v2.6" /><circle cx="1682.4" cy="56.9" r="1.9"/></g>
<g transform="rotate(-43 1690 56.6)"><path d="M1681 55.2h17.6q1.2 1.4 0 2.8h-17.6z"/><path d="M1683.4 55.2v2.8"/><path d="M1681 55.2l-1.8 1.4 1.8 1.4" /></g>
</g>
<path d="M1708.6 52.2l3.3 3.3 3.3-3.3" stroke="#2d74b8" stroke-width="1.5"/>
<path d="M1758.6 53.2v8.2h11.8v-3.2M1761.4 58.6q.6-5.6 7-6.2v-3.4l4.6 4.9-4.6 4.9v-3.4q-4.2-.2-7 3.2z" stroke-width="1.15"/>
<path d="M1830 54v-5.6h8v5.6M1830 60.2h-3.4v-6.2h14.8v6.2h-3.4M1830 58h8v5.4h-8z" stroke-width="1.2"/>
<g stroke="none" fill="#111"><rect x="1885" y="55.8" width="2" height="2" fill="#111" /><rect x="1891" y="55.8" width="2" height="2" fill="#111" /><rect x="1897.2" y="55.8" width="2" height="2" fill="#111" /></g>
</g>
<g>
<path d="M1326.8 699.6V742.6H1670" fill="none" stroke="#5e5e5e" stroke-width="0.55"/>
<text x="1324.93" y="701.72" font-size="3.4" fill="#484848" text-anchor="end" opacity="0.8">6</text>
<text x="1324.93" y="712.32" font-size="3.4" fill="#484848" text-anchor="end" opacity="0.8">4</text>
<text x="1324.93" y="722.92" font-size="3.4" fill="#484848" text-anchor="end" opacity="0.8">2</text>
<text x="1324.93" y="733.52" font-size="3.4" fill="#484848" text-anchor="end" opacity="0.8">0</text>
<text x="1324.93" y="744.12" font-size="3.4" fill="#484848" text-anchor="end" opacity="0.8">-2</text>
<text x="1350.1" y="748.55" font-size="3.4" fill="#484848" textLength="20.6" lengthAdjust="spacingAndGlyphs" opacity="0.8">28-Dec-1949</text>
<text x="1419.2" y="748.55" font-size="3.4" fill="#484848" textLength="20.6" lengthAdjust="spacingAndGlyphs" opacity="0.8">28-Dec-1949</text>
<text x="1487.3" y="748.55" font-size="3.4" fill="#484848" textLength="20.6" lengthAdjust="spacingAndGlyphs" opacity="0.8">28-Dec-1949</text>
<text x="1556.1" y="748.55" font-size="3.4" fill="#484848" textLength="20.6" lengthAdjust="spacingAndGlyphs" opacity="0.8">29-Dec-1949</text>
<text x="1624.7" y="748.55" font-size="3.4" fill="#484848" textLength="20.6" lengthAdjust="spacingAndGlyphs" opacity="0.8">29-Dec-1949</text>
<path d="M1326.8 700.5h2.4M1326.8 711.1h2.4M1326.8 721.7h2.4M1326.8 732.3h2.4M1326.8 742.9h2.4M1360.4 742.6v-2.88M1429.5 742.6v-2.88M1497.6 742.6v-2.88M1566.4 742.6v-2.88M1635 742.6v-2.88" fill="none" stroke="#5e5e5e" stroke-width="0.55"/>
<polyline points="1351.3,732.3 1420.2,732.3 1421.6,724.88 1423,716.4 1424.4,714.54 1428.6,714.01 1431,712.42 1435,711.89 1470,711.89 1500.3,711.63 1503,709.51 1507,707.39 1540,707.12 1670,706.86" fill="none" stroke="#222" stroke-width="0.9" opacity="0.3" stroke-dasharray="1 .9"/>
<polyline points="1351.3,732.3 1420.2,732.3 1421.6,724.88 1423,716.4 1424.4,714.54 1428.6,714.01 1431,712.42 1435,711.89 1470,711.89 1500.3,711.63 1503,709.51 1507,707.39 1540,707.12 1670,706.86" fill="none" stroke="#222" stroke-width="0.5" />
<rect x="1680" y="710.3" width="58.2" height="22.3" fill="#fff" stroke="#5e5e5e" stroke-width="0.7" />
<line x1="1685.82" y1="714.09" x2="1712.01" y2="714.09" stroke="#d99" stroke-width="0.6" stroke-dasharray=".6 .8"/>
<text x="1714.92" y="715.39" font-size="3.6" fill="#484848" opacity="0.85">Min</text>
<line x1="1685.82" y1="719" x2="1712.01" y2="719" stroke="#88c" stroke-width="0.5" />
<text x="1714.92" y="720.29" font-size="3.6" fill="#484848" opacity="0.85">Bary</text>
<line x1="1685.82" y1="723.9" x2="1712.01" y2="723.9" stroke="#c99" stroke-width="0.6" stroke-dasharray=".6 .8"/>
<text x="1714.92" y="725.2" font-size="3.6" fill="#484848" opacity="0.85">Max</text>
<line x1="1685.82" y1="728.81" x2="1712.01" y2="728.81" stroke="#555" stroke-width="0.5" />
<text x="1714.92" y="730.11" font-size="3.6" fill="#484848" opacity="0.85">Interpolation</text>
<path d="M1326.8 767.1V809.4H1668.6" fill="none" stroke="#5e5e5e" stroke-width="0.55"/>
<text x="1324.93" y="773.17" font-size="3.4" fill="#484848" text-anchor="end" opacity="0.8">1</text>
<text x="1324.93" y="781.3" font-size="3.4" fill="#484848" text-anchor="end" opacity="0.8">0.5</text>
<text x="1324.93" y="789.42" font-size="3.4" fill="#484848" text-anchor="end" opacity="0.8">0</text>
<text x="1324.93" y="797.55" font-size="3.4" fill="#484848" text-anchor="end" opacity="0.8">-0.5</text>
<text x="1324.93" y="805.67" font-size="3.4" fill="#484848" text-anchor="end" opacity="0.8">-1</text>
<text x="1342.1" y="816.45" font-size="3.4" fill="#484848" textLength="36.6" lengthAdjust="spacingAndGlyphs" opacity="0.8">28-Dec-1949 09:36:00</text>
<text x="1411.2" y="816.45" font-size="3.4" fill="#484848" textLength="36.6" lengthAdjust="spacingAndGlyphs" opacity="0.8">28-Dec-1949 14:24:00</text>
<text x="1479.3" y="816.45" font-size="3.4" fill="#484848" textLength="36.6" lengthAdjust="spacingAndGlyphs" opacity="0.8">28-Dec-1949 19:12:00</text>
<text x="1548.1" y="816.45" font-size="3.4" fill="#484848" textLength="36.6" lengthAdjust="spacingAndGlyphs" opacity="0.8">29-Dec-1949 00:00:00</text>
<text x="1616.7" y="816.45" font-size="3.4" fill="#484848" textLength="36.6" lengthAdjust="spacingAndGlyphs" opacity="0.8">29-Dec-1949 04:48:00</text>
<path d="M1326.8 771.95h2.4M1326.8 780.08h2.4M1326.8 788.2h2.4M1326.8 796.33h2.4M1326.8 804.45h2.4M1360.4 809.4v-2.88M1429.5 809.4v-2.88M1497.6 809.4v-2.88M1566.4 809.4v-2.88M1635 809.4v-2.88" fill="none" stroke="#5e5e5e" stroke-width="0.55"/>
<polyline points="1351.8,804.45 1668.8,771.95" fill="none" stroke="#2a2ae0" stroke-width="1" />
<circle cx="1351.8" cy="804.45" r="2.1" fill="none" stroke="#2a2ae0" stroke-width=".8"/>
<circle cx="1668.8" cy="771.95" r="2.1" fill="none" stroke="#2a2ae0" stroke-width=".8"/>
<text x="1510.3" y="768.8" font-size="3.4" fill="#484848" text-anchor="middle" opacity="0.7">1</text>
<rect x="1680" y="784.7" width="58.2" height="8" fill="#fff" stroke="#5e5e5e" stroke-width="0.7" />
<line x1="1685.82" y1="788.7" x2="1712.01" y2="788.7" stroke="#2a2ae0" stroke-width="1" />
<circle cx="1698.91" cy="788.7" r="2.16" fill="none" stroke="#2a2ae0" stroke-width=".9"/>
<text x="1714.92" y="790" font-size="3.6" fill="#484848" opacity="0.85">Sens Finaux</text>
<text x="1635" y="820.4" font-size="6.5" fill="#2a2a2a" textLength="4" lengthAdjust="spacingAndGlyphs">1</text>
<text x="1634.6" y="826.2" font-size="6.5" fill="#2a2a2a" textLength="10" lengthAdjust="spacingAndGlyphs">4.8</text>
<text x="1634.6" y="832" font-size="6.5" fill="#2a2a2a" textLength="10" lengthAdjust="spacingAndGlyphs">4.8</text>
<text x="1669.3" y="820.4" font-size="6.5" fill="#2a2a2a" textLength="72" lengthAdjust="spacingAndGlyphs">Oeil Numérisateur: 4.7</text>
<text x="1669.3" y="826.2" font-size="6.5" fill="#2a2a2a" textLength="66" lengthAdjust="spacingAndGlyphs">NUNIEAU direct: 4.8</text>
<text x="1669.3" y="832" font-size="6.5" fill="#2a2a2a" textLength="69" lengthAdjust="spacingAndGlyphs">NUNIEAU normé: 4.8</text>
<path d="M1326.8 834V876.6H1669.3" fill="none" stroke="#5e5e5e" stroke-width="0.55"/>
<text x="1324.93" y="835.22" font-size="3.4" fill="#484848" text-anchor="end" opacity="0.8">5</text>
<text x="1324.93" y="843.74" font-size="3.4" fill="#484848" text-anchor="end" opacity="0.8">4</text>
<text x="1324.93" y="852.26" font-size="3.4" fill="#484848" text-anchor="end" opacity="0.8">3</text>
<text x="1324.93" y="860.78" font-size="3.4" fill="#484848" text-anchor="end" opacity="0.8">2</text>
<text x="1324.93" y="869.3" font-size="3.4" fill="#484848" text-anchor="end" opacity="0.8">1</text>
<text x="1324.93" y="877.82" font-size="3.4" fill="#484848" text-anchor="end" opacity="0.8">0</text>
<text x="1350.1" y="882.55" font-size="3.4" fill="#484848" textLength="20.6" lengthAdjust="spacingAndGlyphs" opacity="0.8">28-Dec-1949</text>
<text x="1419.2" y="882.55" font-size="3.4" fill="#484848" textLength="20.6" lengthAdjust="spacingAndGlyphs" opacity="0.8">28-Dec-1949</text>
<text x="1487.3" y="882.55" font-size="3.4" fill="#484848" textLength="20.6" lengthAdjust="spacingAndGlyphs" opacity="0.8">28-Dec-1949</text>
<text x="1556.1" y="882.55" font-size="3.4" fill="#484848" textLength="20.6" lengthAdjust="spacingAndGlyphs" opacity="0.8">29-Dec-1949</text>
<text x="1624.7" y="882.55" font-size="3.4" fill="#484848" textLength="20.6" lengthAdjust="spacingAndGlyphs" opacity="0.8">29-Dec-1949</text>
<path d="M1326.8 834h2.4M1326.8 842.52h2.4M1326.8 851.04h2.4M1326.8 859.56h2.4M1326.8 868.08h2.4M1326.8 876.6h2.4M1360.4 876.6v-2.88M1429.5 876.6v-2.88M1497.6 876.6v-2.88M1566.4 876.6v-2.88M1635 876.6v-2.88" fill="none" stroke="#5e5e5e" stroke-width="0.55"/>
<rect x="1421.55" y="854.45" width="1.3" height="22.15" fill="#c8f4ce" stroke="#33dd44" stroke-width="0.4" />
<rect x="1423.15" y="874.04" width="1.3" height="2.56" fill="#c8f4ce" stroke="#33dd44" stroke-width="0.4" />
<rect x="1422" y="861.26" width="1.2" height="15.34" fill="#c8cef6" stroke="#3344ee" stroke-width="0.4" />
<rect x="1430.8" y="874.9" width="1.2" height="1.7" fill="#c8cef6" stroke="#3344ee" stroke-width="0.4" />
<rect x="1420" y="851.04" width="1.2" height="25.56" fill="#f6c8c8" stroke="#ee3333" stroke-width="0.4" />
<rect x="1429.4" y="874.9" width="1.2" height="1.7" fill="#f6c8c8" stroke="#ee3333" stroke-width="0.4" />
<rect x="1497.2" y="873.19" width="1.2" height="3.41" fill="#f6c8c8" stroke="#ee3333" stroke-width="0.4" />
<rect x="1500.8" y="873.62" width="1.2" height="2.98" fill="#f6c8c8" stroke="#ee3333" stroke-width="0.4" />
<rect x="1502.4" y="874.04" width="1.2" height="2.56" fill="#f6c8c8" stroke="#ee3333" stroke-width="0.4" />
<line x1="1326.8" y1="876.6" x2="1669.3" y2="876.6" stroke="#ee3333" stroke-width="0.55" opacity="0.85" />
<rect x="1680" y="846.3" width="58.2" height="18" fill="#fff" stroke="#5e5e5e" stroke-width="0.7" />
<rect x="1685.82" y="848.93" width="26.19" height="3.01" fill="#d4f7d8" stroke="#33dd44" stroke-width="0.7" />
<text x="1714.92" y="851.74" font-size="3.6" fill="#484848" opacity="0.85">Diff des min</text>
<rect x="1685.82" y="853.79" width="26.19" height="3.01" fill="#d2d4fb" stroke="#3344ee" stroke-width="0.7" />
<text x="1714.92" y="856.6" font-size="3.6" fill="#484848" opacity="0.85">Diff des bary</text>
<rect x="1685.82" y="858.65" width="26.19" height="3.01" fill="#fbd4d4" stroke="#ee3333" stroke-width="0.7" />
<text x="1714.92" y="861.46" font-size="3.6" fill="#484848" opacity="0.85">Diff des max</text>
<rect x="1326.8" y="900.6" width="344.2" height="42.8" fill="none" stroke="#5e5e5e" stroke-width="0.55" />
<text x="1324.93" y="901.82" font-size="3.4" fill="#484848" text-anchor="end" opacity="0.8">2</text>
<text x="1324.93" y="912.52" font-size="3.4" fill="#484848" text-anchor="end" opacity="0.8">1.5</text>
<text x="1324.93" y="923.22" font-size="3.4" fill="#484848" text-anchor="end" opacity="0.8">1</text>
<text x="1324.93" y="933.92" font-size="3.4" fill="#484848" text-anchor="end" opacity="0.8">0.5</text>
<text x="1324.93" y="944.62" font-size="3.4" fill="#484848" text-anchor="end" opacity="0.8">0</text>
<text x="1350.1" y="949.35" font-size="3.4" fill="#484848" textLength="20.6" lengthAdjust="spacingAndGlyphs" opacity="0.8">28-Dec-1949</text>
<text x="1419.2" y="949.35" font-size="3.4" fill="#484848" textLength="20.6" lengthAdjust="spacingAndGlyphs" opacity="0.8">28-Dec-1949</text>
<text x="1488" y="949.35" font-size="3.4" fill="#484848" textLength="20.6" lengthAdjust="spacingAndGlyphs" opacity="0.8">28-Dec-1949</text>
<text x="1557.1" y="949.35" font-size="3.4" fill="#484848" textLength="20.6" lengthAdjust="spacingAndGlyphs" opacity="0.8">29-Dec-1949</text>
<text x="1626" y="949.35" font-size="3.4" fill="#484848" textLength="20.6" lengthAdjust="spacingAndGlyphs" opacity="0.8">29-Dec-1949</text>
<path d="M1326.8 900.6h2.4M1671 900.6h-2.4M1326.8 911.3h2.4M1671 911.3h-2.4M1326.8 922h2.4M1671 922h-2.4M1326.8 932.7h2.4M1671 932.7h-2.4M1326.8 943.4h2.4M1671 943.4h-2.4M1360.4 943.4v-2.88M1360.4 900.6v2.88M1429.5 943.4v-2.88M1429.5 900.6v2.88M1498.3 943.4v-2.88M1498.3 900.6v2.88M1567.4 943.4v-2.88M1567.4 900.6v2.88M1636.3 943.4v-2.88M1636.3 900.6v2.88" fill="none" stroke="#5e5e5e" stroke-width="0.55"/>
<rect x="1420.7" y="913.44" width="1" height="29.96" fill="#777" stroke="#222" stroke-width="0.4" />
<rect x="1422.3" y="907.02" width="1" height="36.38" fill="#777" stroke="#222" stroke-width="0.4" />
<rect x="1423.9" y="938.05" width="1" height="5.35" fill="#777" stroke="#222" stroke-width="0.4" />
<rect x="1425.5" y="942.33" width="1" height="1.07" fill="#777" stroke="#222" stroke-width="0.4" />
<rect x="1428.7" y="941.26" width="1" height="2.14" fill="#777" stroke="#222" stroke-width="0.4" />
<rect x="1430.2" y="939.12" width="1" height="4.28" fill="#777" stroke="#222" stroke-width="0.4" />
<rect x="1431.7" y="939.55" width="1" height="3.85" fill="#777" stroke="#222" stroke-width="0.4" />
<rect x="1433.2" y="942.33" width="1" height="1.07" fill="#777" stroke="#222" stroke-width="0.4" />
<rect x="1497.8" y="940.19" width="1" height="3.21" fill="#777" stroke="#222" stroke-width="0.4" />
<rect x="1501.1" y="938.05" width="1" height="5.35" fill="#777" stroke="#222" stroke-width="0.4" />
<rect x="1502.5" y="936.98" width="1" height="6.42" fill="#777" stroke="#222" stroke-width="0.4" />
<rect x="1504.1" y="940.19" width="1" height="3.21" fill="#777" stroke="#222" stroke-width="0.4" />
<rect x="1505.5" y="940.83" width="1" height="2.57" fill="#777" stroke="#222" stroke-width="0.4" />
<rect x="1507.1" y="941.26" width="1" height="2.14" fill="#777" stroke="#222" stroke-width="0.4" />
<rect x="1508.5" y="942.76" width="1" height="0.64" fill="#777" stroke="#222" stroke-width="0.4" />
<rect x="1681.3" y="918.4" width="56.9" height="8" fill="#fff" stroke="#5e5e5e" stroke-width="0.7" />
<rect x="1686.99" y="921.16" width="25.61" height="2.48" fill="#fff" stroke="#222" stroke-width="0.7" />
<text x="1715.44" y="923.7" font-size="3.6" fill="#484848" opacity="0.85">Lame 6mn</text>
<rect x="1326.8" y="967.7" width="340.8" height="48.1" fill="none" stroke="#5e5e5e" stroke-width="0.55" />
<text x="1324.93" y="968.92" font-size="3.4" fill="#484848" text-anchor="end" opacity="0.8">5</text>
<text x="1324.93" y="978.54" font-size="3.4" fill="#484848" text-anchor="end" opacity="0.8">4</text>
<text x="1324.93" y="988.16" font-size="3.4" fill="#484848" text-anchor="end" opacity="0.8">3</text>
<text x="1324.93" y="997.78" font-size="3.4" fill="#484848" text-anchor="end" opacity="0.8">2</text>
<text x="1324.93" y="1007.4" font-size="3.4" fill="#484848" text-anchor="end" opacity="0.8">1</text>
<text x="1324.93" y="1017.02" font-size="3.4" fill="#484848" text-anchor="end" opacity="0.8">0</text>
<text x="1350.1" y="1021.75" font-size="3.4" fill="#484848" textLength="20.6" lengthAdjust="spacingAndGlyphs" opacity="0.8">28-Dec-1949</text>
<text x="1418.2" y="1021.75" font-size="3.4" fill="#484848" textLength="20.6" lengthAdjust="spacingAndGlyphs" opacity="0.8">28-Dec-1949</text>
<text x="1486.5" y="1021.75" font-size="3.4" fill="#484848" textLength="20.6" lengthAdjust="spacingAndGlyphs" opacity="0.8">28-Dec-1949</text>
<text x="1554.9" y="1021.75" font-size="3.4" fill="#484848" textLength="20.6" lengthAdjust="spacingAndGlyphs" opacity="0.8">29-Dec-1949</text>
<text x="1622.7" y="1021.75" font-size="3.4" fill="#484848" textLength="20.6" lengthAdjust="spacingAndGlyphs" opacity="0.8">29-Dec-1949</text>
<path d="M1326.8 967.7h2.4M1667.6 967.7h-2.4M1326.8 977.32h2.4M1667.6 977.32h-2.4M1326.8 986.94h2.4M1667.6 986.94h-2.4M1326.8 996.56h2.4M1667.6 996.56h-2.4M1326.8 1006.18h2.4M1667.6 1006.18h-2.4M1326.8 1015.8h2.4M1667.6 1015.8h-2.4M1360.4 1015.8v-2.88M1360.4 967.7v2.88M1428.5 1015.8v-2.88M1428.5 967.7v2.88M1496.8 1015.8v-2.88M1496.8 967.7v2.88M1565.2 1015.8v-2.88M1565.2 967.7v2.88M1633 1015.8v-2.88M1633 967.7v2.88" fill="none" stroke="#5e5e5e" stroke-width="0.55"/>
<polyline points="1419.4,1015.8 1420.6,1002.33 1421.8,986.94 1422.8,984.05 1427,983.09 1429,982.61 1432,979.72 1435.2,978.76 1470,978.76 1499,978.28 1502,974.43 1506.6,970.59 1540,970.11 1667.6,969.62" fill="none" stroke="#3333dd" stroke-width="0.65" />
<rect x="1678.3" y="987.7" width="59.9" height="8.3" fill="#fff" stroke="#5e5e5e" stroke-width="0.7" />
<line x1="1684.29" y1="991.85" x2="1711.24" y2="991.85" stroke="#3333dd" stroke-width="0.5" />
<text x="1714.24" y="993.15" font-size="3.6" fill="#484848" opacity="0.85">Volume Pluie</text>
</g>
</svg>
</div>
</body></html>
